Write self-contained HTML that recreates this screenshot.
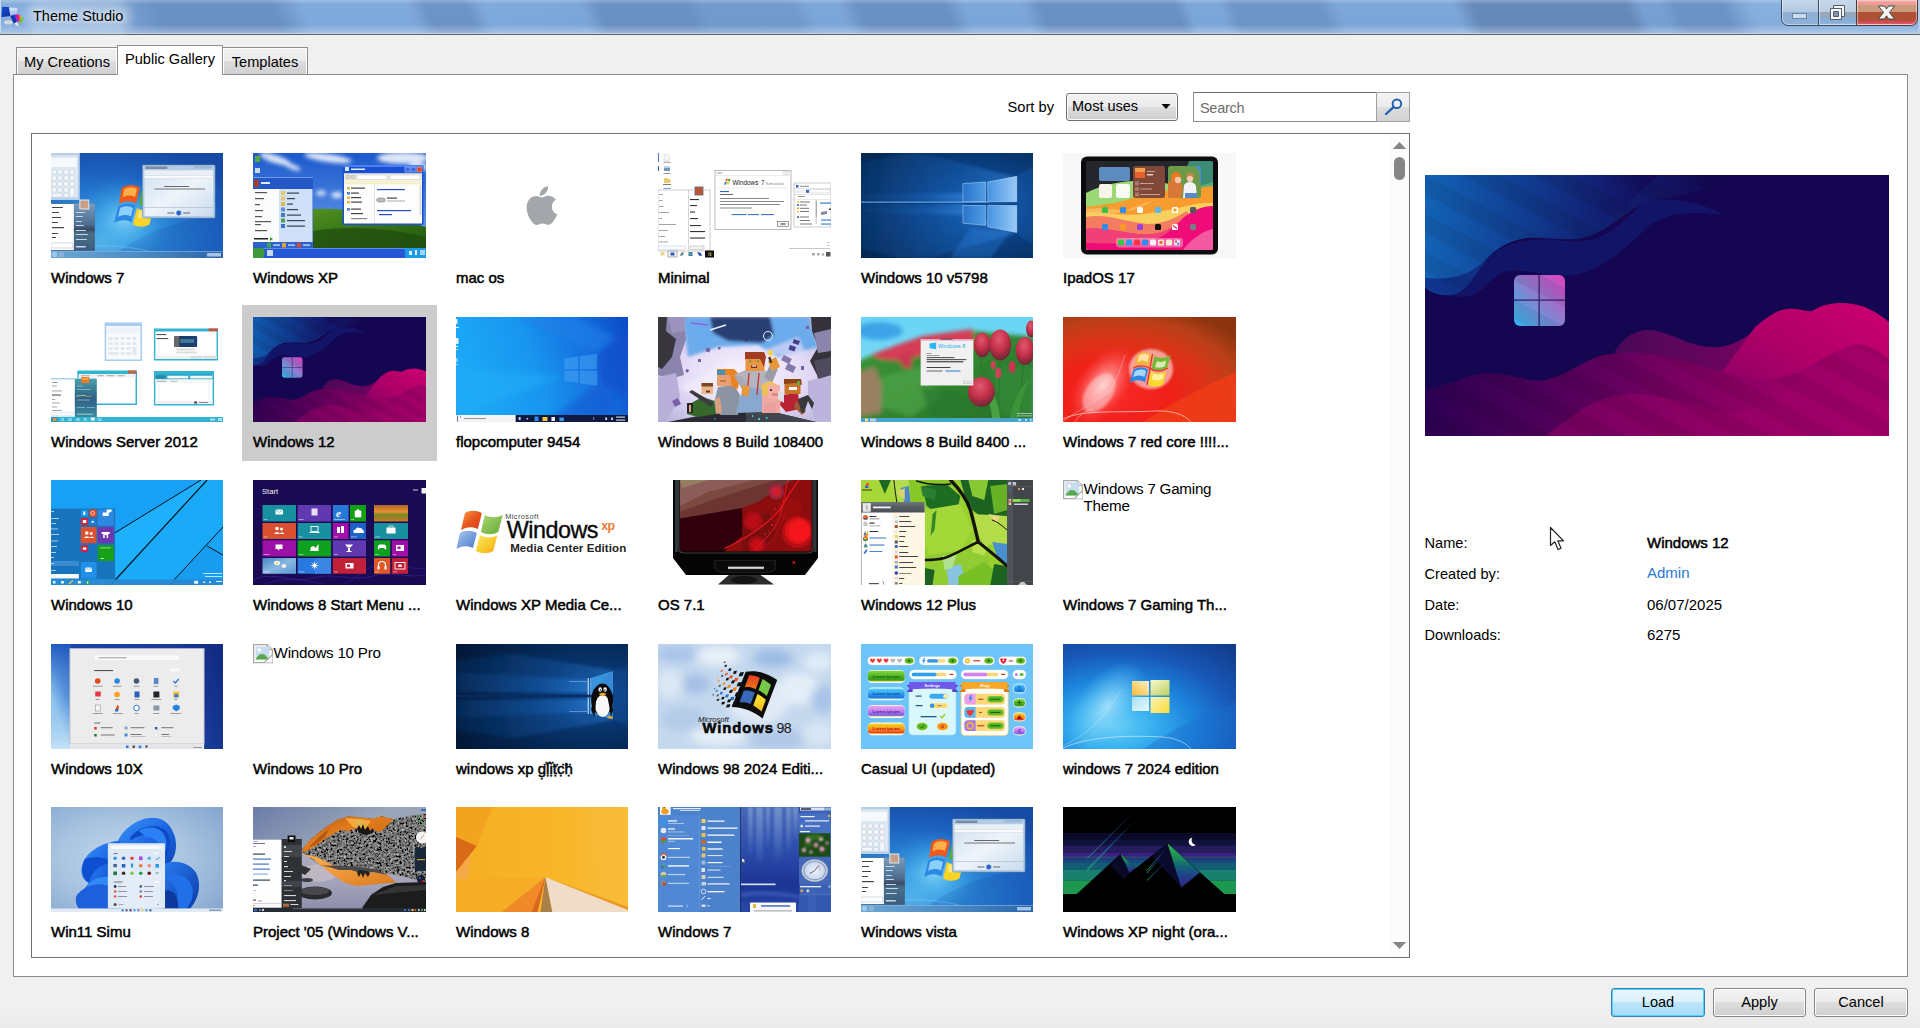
<!DOCTYPE html>
<html lang="en">
<head>
<meta charset="utf-8">
<title>Theme Studio</title>
<style>
*{box-sizing:border-box;margin:0;padding:0}
html,body{width:1920px;height:1028px;overflow:hidden;background:#f0f0f0 linear-gradient(#f0f0f0 0,#f0f0f0 1005px,#ebebeb 1028px) no-repeat;font-family:"Liberation Sans",sans-serif;color:#000}
body{position:relative}
.abs{position:absolute}
#titlebar{position:absolute;left:0;top:0;width:1920px;height:35px;overflow:hidden;
 background:#6f98c9}
#titlebar svg{position:absolute;left:0;top:0}
#title{position:absolute;left:33px;top:7px;font-size:14.5px;line-height:19px;color:#000;white-space:nowrap;
 text-shadow:0 0 5px rgba(255,255,255,0.9),0 0 9px rgba(255,255,255,0.8)}
.tab{position:absolute;font-size:14.6px;line-height:18px;white-space:nowrap;border:1px solid #8e8f8f;border-bottom:none;
 background:linear-gradient(#f2f2f2 0%,#ebebeb 49%,#dddddd 50%,#cfcfcf 100%);box-shadow:inset 1px 1px 0 #fcfcfc,inset -1px 0 0 #fcfcfc;text-align:center}
.tab.act{background:#fff;box-shadow:none;z-index:3}
#panel{position:absolute;left:13px;top:74px;width:1895px;height:903px;background:#fff;border:1px solid #8b8b8b}
#listbox{position:absolute;left:31px;top:133px;width:1379px;height:825px;background:#fff;border:1px solid #6f6f6f;overflow:hidden}
.item{position:absolute;width:195px;height:156px}
.item.sel{background:#cccccc}
.item svg,.item .ph{position:absolute;left:11px;top:12px;width:173px;height:105px;display:block}
.item .lbl{position:absolute;left:11px;top:127px;width:180px;font-size:15px;line-height:20px;font-weight:normal;-webkit-text-stroke:0.5px #000;white-space:nowrap;color:#000;letter-spacing:0}
.btn{position:absolute;height:29px;font-size:14.6px;line-height:27.5px;text-align:center;border:1px solid #858585;border-radius:3px;
 background:linear-gradient(#f2f2f2 0%,#ebebeb 49%,#dddddd 50%,#cfcfcf 100%);box-shadow:inset 0 0 0 1px #fcfcfc}
.row{position:absolute;font-size:15px;line-height:20px;white-space:nowrap}
</style>
</head>
<body>
<div id="titlebar">
<svg width="1920" height="35" viewBox="0 0 1920 35">
 <defs>
  <linearGradient id="tbg" x1="0" x2="1920" y1="0" y2="0" gradientUnits="userSpaceOnUse">
   <stop offset="0" stop-color="#86aedd"/>
   <stop offset="0.06" stop-color="#7ba3d5"/>
   <stop offset="0.085" stop-color="#6890c3"/>
   <stop offset="0.145" stop-color="#6890c3"/>
   <stop offset="0.16" stop-color="#7ea8dc"/>
   <stop offset="0.215" stop-color="#7ea8dc"/>
   <stop offset="0.225" stop-color="#6b93c6"/>
   <stop offset="0.245" stop-color="#6b93c6"/>
   <stop offset="0.255" stop-color="#7ea8dc"/>
   <stop offset="0.305" stop-color="#7ba5d9"/>
   <stop offset="0.315" stop-color="#6890c3"/>
   <stop offset="0.36" stop-color="#6890c3"/>
   <stop offset="0.37" stop-color="#7099cc"/>
   <stop offset="0.415" stop-color="#7099cc"/>
   <stop offset="0.425" stop-color="#7ba5d9"/>
   <stop offset="0.44" stop-color="#7ba5d9"/>
   <stop offset="0.45" stop-color="#6890c3"/>
   <stop offset="0.495" stop-color="#6890c3"/>
   <stop offset="0.505" stop-color="#7ba5d9"/>
   <stop offset="0.535" stop-color="#7ba5d9"/>
   <stop offset="0.545" stop-color="#6890c3"/>
   <stop offset="0.615" stop-color="#6890c3"/>
   <stop offset="0.622" stop-color="#7ba5d9"/>
   <stop offset="0.638" stop-color="#7ba5d9"/>
   <stop offset="0.645" stop-color="#6c94c7"/>
   <stop offset="0.69" stop-color="#6c94c7"/>
   <stop offset="0.70" stop-color="#7ba5d9"/>
   <stop offset="0.76" stop-color="#7ba5d9"/>
   <stop offset="0.77" stop-color="#6488b8"/>
   <stop offset="0.85" stop-color="#6488b8"/>
   <stop offset="0.858" stop-color="#769fd2"/>
   <stop offset="0.868" stop-color="#769fd2"/>
   <stop offset="0.875" stop-color="#6a92c5"/>
   <stop offset="0.9" stop-color="#6a92c5"/>
   <stop offset="0.915" stop-color="#86aedd"/>
   <stop offset="1" stop-color="#86aedd"/>
  </linearGradient>
  <linearGradient id="tsh" x1="0" x2="0" y1="0" y2="35" gradientUnits="userSpaceOnUse">
   <stop offset="0" stop-color="#fff" stop-opacity="0.25"/>
   <stop offset="0.12" stop-color="#fff" stop-opacity="0.02"/>
   <stop offset="0.7" stop-color="#fff" stop-opacity="0"/>
   <stop offset="0.93" stop-color="#fff" stop-opacity="0.3"/>
   <stop offset="1" stop-color="#fff" stop-opacity="0.3"/>
  </linearGradient>
  <linearGradient id="cb1" x1="0" x2="0" y1="0" y2="25" gradientUnits="userSpaceOnUse">
   <stop offset="0" stop-color="#c4d6ea"/><stop offset="0.46" stop-color="#b1c9e2"/><stop offset="0.47" stop-color="#8fb1d6"/><stop offset="1" stop-color="#8db0d8"/>
  </linearGradient>
  <linearGradient id="cb3" x1="0" x2="0" y1="0" y2="25" gradientUnits="userSpaceOnUse">
   <stop offset="0" stop-color="#c8d8ea"/><stop offset="0.46" stop-color="#bccee2"/><stop offset="0.47" stop-color="#98a8ba"/><stop offset="0.66" stop-color="#98a8ba"/><stop offset="0.67" stop-color="#88aad4"/><stop offset="0.92" stop-color="#8cb0d8"/><stop offset="1" stop-color="#a8c4e0"/>
  </linearGradient>
  <linearGradient id="cb2" x1="0" x2="0" y1="0" y2="25" gradientUnits="userSpaceOnUse">
   <stop offset="0" stop-color="#f4d0c8"/><stop offset="0.1" stop-color="#f09a9a"/><stop offset="0.2" stop-color="#f09a9a"/><stop offset="0.21" stop-color="#c99b7c"/><stop offset="0.47" stop-color="#c99b7c"/><stop offset="0.48" stop-color="#b05035"/><stop offset="0.83" stop-color="#b05035"/><stop offset="0.86" stop-color="#d04a5a"/><stop offset="0.93" stop-color="#d04a5a"/><stop offset="1" stop-color="#f0c8a8"/>
  </linearGradient>
 </defs>
 <g transform="skewX(22) translate(-8 0)"><rect x="-40" y="0" width="2000" height="35" fill="url(#tbg)"/></g>
 <rect x="0" y="0" width="1920" height="35" fill="url(#tsh)"/>
 <rect x="0" y="33" width="1920" height="1" fill="#c4d0dc"/>
 <rect x="0" y="34" width="1920" height="1" fill="#5c646c"/>
 <rect x="0" y="0" width="1" height="33" fill="#c4d8ee"/>
 <rect x="1918" y="0" width="2" height="33" fill="#b4cce8"/>
 <!-- caption buttons -->
 <path d="M1781.5 -1 V18 Q1781.5 25.5 1789 25.5 H1818.5 V-1 Z" fill="url(#cb1)" stroke="#3c4a60" stroke-width="1"/>
 <path d="M1818.5 -1 V25.5 H1856.5 V-1 Z" fill="url(#cb3)" stroke="#3c4a60" stroke-width="1"/>
 <path d="M1856.5 -1 V25.5 H1910 Q1917.5 25.5 1917.5 18 V-1 Z" fill="url(#cb2)" stroke="#4a3a3a" stroke-width="1"/>
 <path d="M1782.5 0 V18 Q1782.5 24.5 1789 24.5 H1817.5" fill="none" stroke="#fff" stroke-opacity="0.45"/>
 <path d="M1819.5 0 V24.5 H1855.5" fill="none" stroke="#fff" stroke-opacity="0.45"/>
 <path d="M1857.5 0 V24.5 H1910 Q1916.5 24.5 1916.5 18 V0" fill="none" stroke="#fff" stroke-opacity="0.45"/>
 <rect x="1792.5" y="13.5" width="14" height="5" fill="#c9dced" stroke="#6f86a4"/>
 <g fill="#f4f6f8" stroke="#555d68" stroke-width="1">
  <path d="M1833.5 5.500 h11 v11 h-11 z M1836.500 8.500 v5 h5 v-5 z" fill-rule="evenodd"/>
  <path d="M1830.500 8.500 h11 v11 h-11 z"/><path d="M1833.500 11.500 h5 v5 h-5 z" fill="#7c94b4"/>
 </g>
 <path d="M1878.300 6 h6 l2.200 3 l2.200 -3 h6 l-5.300 6.400 l5.300 6.600 h-6 l-2.200 -3.200 l-2.200 3.200 h-6 l5.300 -6.600 z" fill="#f4f4f4" stroke="#4a4848" stroke-width="1" stroke-linejoin="round"/>
 <!-- app icon -->
 <defs><linearGradient id="icb" x1="0" y1="0" x2="1" y2="1"><stop offset="0" stop-color="#1450d0"/><stop offset="1" stop-color="#0c30a0"/></linearGradient>
 <linearGradient id="icw" x1="0" y1="0" x2="0" y2="1"><stop offset="0" stop-color="#dce8f8"/><stop offset="1" stop-color="#98b8f0"/></linearGradient></defs>
 <g>
  <ellipse cx="8.400" cy="22.400" rx="4.400" ry="2.200" fill="#d4d8dc"/>
  <path d="M8.800 7.400 L17.300 7.900 L16.800 14.500 L10.200 15 Z" fill="url(#icw)" stroke="#b0b8c8" stroke-width="0.400"/>
  <path d="M2.100 6.700 L8.800 7 L10.200 16.100 L1.400 17.200 Z" fill="url(#icb)"/>
  <path d="M10.200 16.100 L14.700 14.700 L17 21.700 L13.700 23.500 Z" fill="#1038b0"/>
  <path d="M14.700 14.700 L17 14.300 L18.600 21.300 L17 21.700 Z" fill="#c010c0"/>
  <path d="M17 14.300 L18.800 15 L19.800 21.500 L18.600 21.300 Z" fill="#f01060"/>
  <path d="M18.800 15 L20.200 15.600 L20.600 22 L19.800 21.500 Z" fill="#f85010"/>
  <path d="M20.200 15.600 L21.400 16.400 L20.800 22.500 L20.600 22 Z" fill="#f8a818"/>
  <path d="M21.400 16.400 L24.200 18.600 L19.600 25.200 L20 21.700 Z" fill="#58c828"/>
  <path d="M14.400 23.800 L16.800 22 L19.300 26.600 L17 25.800 Z" fill="#f0f0f4" stroke="#a0a8b0" stroke-width="0.300"/>
 </g>
</svg>
<div class="abs" style="left:34px;top:11px;width:88px;height:12px;border-radius:8px;background:rgba(255,255,255,0.3);box-shadow:0 0 9px 10px rgba(255,255,255,0.3)"></div>
<div id="title">Theme Studio</div>
</div>

<div class="tab" style="left:16px;top:47px;width:102px;height:28px;padding-top:5px">My Creations</div>
<div class="tab" style="left:222px;top:47px;width:86px;height:28px;padding-top:5px">Templates</div>
<div id="panel"></div>
<div class="tab act" style="left:117px;top:45px;width:106px;height:30px;padding-top:4px">Public Gallery</div>

<div class="row" style="left:1007.5px;top:97px;font-size:14.7px">Sort by</div>
<div class="abs" style="left:1066px;top:93px;width:112px;height:28px;border:1px solid #707070;border-radius:3px;background:linear-gradient(#f2f2f2 0%,#ebebeb 49%,#dddddd 50%,#cfcfcf 100%);box-shadow:inset 0 0 0 1px #fcfcfc">
 <div class="row" style="left:5px;top:2px;font-size:14.5px">Most uses</div>
 <svg class="abs" style="left:93px;top:9px" width="12" height="7" viewBox="0 0 12 7"><path d="M1.500 1 H10.500 L6 6 Z" fill="#000"/></svg>
</div>
<div class="abs" style="left:1193px;top:92px;width:184px;height:30px;border:1px solid #8e8e8e;border-top-color:#6e6e6e;background:#fff">
 <div class="row" style="left:6px;top:4.5px;font-size:14.5px;letter-spacing:-0.3px;color:#6d6d6d">Search</div>
</div>
<div class="abs" style="left:1376px;top:92px;width:34px;height:30px;border:1px solid #a0a0a0;background:linear-gradient(#f4f4f4 0%,#ececec 49%,#dedede 50%,#d2d2d2 100%)">
 <svg class="abs" style="left:7px;top:4px" width="20" height="20" viewBox="0 0 20 20"><circle cx="12.900" cy="6.750" r="4.300" fill="none" stroke="#1e5fb4" stroke-width="1.900"/><path d="M9.600 10.200 L2 17" stroke="#1e5fb4" stroke-width="2.300" stroke-linecap="round"/></svg>
</div>

<div id="listbox">
 <!-- scrollbar -->
 <svg class="abs" style="left:1358px;top:0px" width="19" height="823" viewBox="0 0 19 823">
  <rect x="0" y="0" width="19" height="823" fill="#fcfcfc"/>
  <path d="M2.800 15 H16.200 L9.500 8 Z" fill="#868686"/>
  <rect x="4" y="23" width="11" height="23" rx="5.500" fill="#868686"/>
  <path d="M2.800 808 H16.200 L9.500 815 Z" fill="#868686"/>
 </svg>
<div class="item" style="left:8px;top:7px"><svg style="width:172px" preserveAspectRatio="none" viewBox="0 0 173 105">
<defs>
<radialGradient id="t01_bg" cx="0.3" cy="0.85" r="0.95"><stop offset="0" stop-color="#58b8ec"/><stop offset="0.35" stop-color="#2c8ad8"/><stop offset="0.7" stop-color="#1c62c0"/><stop offset="1" stop-color="#164aa4"/></radialGradient>
<linearGradient id="t01_win" x1="0" y1="0" x2="1" y2="1"><stop offset="0" stop-color="#cfe0f0"/><stop offset="0.5" stop-color="#eef4fa"/><stop offset="1" stop-color="#cadcee"/></linearGradient>
</defs>
<rect width="173" height="105" fill="url(#t01_bg)"/>
<radialGradient id="t01_gl" cx="0.5" cy="0.5" r="0.5"><stop offset="0" stop-color="#8cdcfc" stop-opacity="0.85"/><stop offset="0.5" stop-color="#48b0ec" stop-opacity="0.5"/><stop offset="1" stop-color="#2c8ad8" stop-opacity="0"/></radialGradient>
<path d="M60 105 C90 80 120 70 173 60 V105 Z" fill="#1a58b4" fill-opacity="0.35"/>
<ellipse cx="74" cy="66" rx="50" ry="42" fill="url(#t01_gl)"/>
<path d="M0 100 C40 88 90 92 120 105" stroke="#a8dcf8" stroke-width="0.500" fill="none" stroke-opacity="0.600"/>
<!-- logo -->
<g transform="translate(0 3)">
<path d="M71 32 C77 28 84 28 89.500 31.500 L85.500 47.500 C80 44.500 74.500 44.500 68.500 48 Z" fill="#f0581c"/>
<path d="M73.500 33.500 C78 30.500 83 30.500 86.500 33 L84.500 41 C80.500 39 76.500 39 72 41.500 Z" fill="#f8b048"/>
<path d="M67.500 50.500 C73.500 46.500 80 47 85 50 L81 66.500 C76 63.500 69.500 63.500 63.500 67 Z" fill="#2c88e4"/>
<path d="M69.500 52 C74 49.500 79 50 82.500 52 L80.500 60.500 C76.500 58.500 72 58.500 67.500 61 Z" fill="#8cd0fc"/>
<path d="M86.500 52 C91.500 55 97.500 55 103 52 L99 68.500 C93.500 71.500 88 71.500 82.500 68.500 Z" fill="#f8d428"/>
<path d="M88.500 54 C92 56 96 56 100 54.500 L98.500 61 C95 63 91 63 87.500 61.500 Z" fill="#fcf0a0" fill-opacity="0.700"/>
<path d="M91.500 34 C95.500 36.500 100 36.500 104.500 34 L101 48.500 C97 50.500 92.500 50.500 88.500 48.500 Z" fill="#58b030"/>
</g>
<!-- calculator -->
<rect x="0" y="0" width="29" height="47" fill="#b8d0e8"/>
<rect x="0" y="2.500" width="27" height="42" fill="#dfe9f3"/>
<rect x="0" y="5" width="26" height="9" fill="#f6f9fc"/>
<g fill="#f4f7fa" stroke="#a8b8c8" stroke-width="0.300"><rect x="1" y="17" width="4.500" height="4"/><rect x="7" y="17" width="4.500" height="4"/><rect x="13" y="17" width="4.500" height="4"/><rect x="19" y="17" width="4.500" height="4"/><rect x="1" y="23" width="4.500" height="4"/><rect x="7" y="23" width="4.500" height="4"/><rect x="13" y="23" width="4.500" height="4"/><rect x="19" y="23" width="4.500" height="4"/><rect x="1" y="29" width="4.500" height="4"/><rect x="7" y="29" width="4.500" height="4"/><rect x="13" y="29" width="4.500" height="4"/><rect x="19" y="29" width="4.500" height="4"/><rect x="1" y="35" width="4.500" height="4"/><rect x="7" y="35" width="4.500" height="4"/><rect x="13" y="35" width="4.500" height="4"/><rect x="19" y="35" width="4.500" height="9"/><rect x="1" y="40.500" width="10.500" height="3.500"/><rect x="13" y="40.500" width="4.500" height="3.500"/></g>
<!-- start menu -->
<rect x="0" y="50" width="44" height="48" rx="1" fill="#4a739e"/>
<linearGradient id="t01_smr" x1="0" y1="0" x2="0" y2="1"><stop offset="0" stop-color="#7c9cbc"/><stop offset="0.45" stop-color="#4c6c90"/><stop offset="0.55" stop-color="#3a4c64"/><stop offset="0.65" stop-color="#4a7088"/><stop offset="1" stop-color="#3c5c80"/></linearGradient><rect x="23" y="50.500" width="21" height="47" fill="url(#t01_smr)"/>
<rect x="0" y="51" width="23" height="46" fill="#fdfdfe"/>
<rect x="29" y="47" width="9" height="9" fill="#c8a088" stroke="#dfe8f0" stroke-width="1"/>
<g fill="#444"><rect x="1" y="54" width="11" height="1"/><rect x="1" y="59" width="7" height="1"/><rect x="1" y="64" width="9" height="1"/><rect x="1" y="69" width="6" height="1"/><rect x="1" y="74" width="12" height="1.200"/><rect x="1" y="80" width="6" height="1"/><rect x="1" y="84" width="4" height="1"/></g>
<g fill="#c8d8ea"><rect x="25" y="59" width="9" height="1"/><rect x="25" y="63" width="7" height="1"/><rect x="25" y="68" width="6" height="1"/><rect x="25" y="72" width="8" height="1"/><rect x="25" y="77" width="10" height="1"/><rect x="25" y="81" width="12" height="1"/><rect x="25" y="86" width="11" height="1"/><rect x="25" y="93" width="10" height="1.500"/></g>
<rect x="0" y="90" width="22" height="5" fill="#fff" stroke="#9ab" stroke-width="0.400"/>
<!-- dialog -->
<rect x="92" y="12" width="73" height="53" rx="1" fill="#b4cce6" stroke="#6d8cb0" stroke-width="0.600"/>
<rect x="94" y="17.500" width="69" height="45.500" fill="url(#t01_win)"/>
<rect x="94" y="17.500" width="69" height="4.500" fill="#e9eff6"/>
<rect x="94" y="22.500" width="69" height="3" fill="#f7f9fc" stroke="#b8c4d2" stroke-width="0.300"/>
<rect x="95" y="13.500" width="22" height="2.500" fill="#5c6f88" fill-opacity="0.7"/>
<rect x="144" y="12.500" width="18" height="3" fill="#9db8d8"/>
<rect x="114" y="33" width="25" height="1" fill="#666"/><rect x="104" y="35.500" width="51" height="1" fill="#777"/>
<rect x="94" y="54" width="69" height="0.600" fill="#a8b8cc"/>
<circle cx="128.500" cy="60" r="2.800" fill="#2864c8" stroke="#d8e8f8" stroke-width="0.600"/>
<rect x="117" y="59.500" width="7" height="1" fill="#667"/><rect x="133" y="59.500" width="7" height="1" fill="#667"/>
<!-- taskbar -->
<linearGradient id="t01_tb" x1="0" y1="0" x2="1" y2="0"><stop offset="0" stop-color="#6ca8d4"/><stop offset="0.5" stop-color="#4c8cc4"/><stop offset="1" stop-color="#2c64ac"/></linearGradient><rect x="0" y="98" width="173" height="7" fill="url(#t01_tb)"/>
<rect x="0" y="98" width="173" height="0.700" fill="#86b4e0"/>
<circle cx="3.500" cy="101.500" r="2.800" fill="#9cc8ec"/><rect x="8" y="99.500" width="5" height="4.500" fill="#8fb2d6"/>
<rect x="157" y="100" width="14" height="3.500" fill="#a8c4e4"/>
</svg>
<div class="lbl">Windows 7</div></div>
<div class="item" style="left:210px;top:7px"><svg preserveAspectRatio="none" viewBox="0 0 173 105">
<defs>
<linearGradient id="t02_sky" x1="0" y1="0" x2="0" y2="1"><stop offset="0" stop-color="#1c58cc"/><stop offset="0.6" stop-color="#5088e0"/><stop offset="1" stop-color="#8cb4ec"/></linearGradient>
<linearGradient id="t02_hill" x1="0" y1="0" x2="1" y2="1"><stop offset="0" stop-color="#5c9c24"/><stop offset="0.45" stop-color="#3c7a18"/><stop offset="1" stop-color="#1c4c0c"/></linearGradient>
<filter id="t02_bl"><feGaussianBlur stdDeviation="2"/></filter>
</defs>
<rect width="173" height="105" fill="url(#t02_sky)"/>
<g filter="url(#t02_bl)" fill="#fff" fill-opacity="0.85"><ellipse cx="22" cy="6" rx="16" ry="4" transform="rotate(18 22 6)"/><ellipse cx="75" cy="5" rx="24" ry="4" transform="rotate(8 75 5)"/><ellipse cx="150" cy="5" rx="26" ry="6"/><ellipse cx="165" cy="14" rx="10" ry="4"/><ellipse cx="68" cy="40" rx="5" ry="2.500"/><ellipse cx="84" cy="42" rx="6" ry="3"/><ellipse cx="40" cy="14" rx="8" ry="2.500" transform="rotate(20 40 14)"/></g>
<path d="M40 58 C60 55 85 55 100 58 C130 63 155 69 173 74 V105 H0 V60 Z" fill="url(#t02_hill)"/>
<path d="M60 78 C100 72 140 76 173 84 V105 H60 Z" fill="#204c10" fill-opacity="0.7"/>
<!-- desktop icons -->
<rect x="2" y="3" width="5" height="6" fill="#58a840"/><rect x="2" y="15" width="5" height="5" fill="#d0d8e8"/><rect x="2" y="25" width="5" height="6" fill="#a0a8b8"/>
<!-- start menu -->
<rect x="0" y="24" width="60" height="72" fill="#2c62cc"/>
<rect x="0" y="24" width="60" height="12" fill="#2458c4"/><rect x="0" y="24" width="60" height="1" fill="#6c9cec"/>
<rect x="1" y="27" width="5" height="7" fill="#a04030"/><rect x="8" y="29" width="9" height="2" fill="#dfe8f8"/>
<rect x="0" y="36" width="26" height="53" fill="#fcfcfc"/>
<rect x="26" y="36" width="33.500" height="53" fill="#d0e0f8"/>
<g fill="#555"><rect x="2" y="39" width="12" height="1.200"/><rect x="2" y="45" width="9" height="1.200"/><rect x="2" y="51" width="5" height="1.200"/><rect x="2" y="57" width="8" height="1.200"/><rect x="2" y="63" width="7" height="1.200"/><rect x="2" y="68" width="16" height="1.200"/><rect x="2" y="71" width="6" height="1.200"/><rect x="2" y="77" width="12" height="1.200"/><rect x="1" y="85" width="14" height="1.500" fill="#222"/></g>
<path d="M17 84 l3 2 l-3 2 z" fill="#30a030"/>
<g><rect x="28" y="38" width="4" height="4" fill="#e8c860"/><rect x="28" y="43.500" width="4" height="4" fill="#e8c860"/><rect x="28" y="49" width="4" height="4" fill="#e0b850"/><rect x="28" y="54.500" width="4" height="4" fill="#6090d0"/><rect x="28" y="60" width="4" height="4" fill="#4878c0"/><rect x="28" y="65.500" width="4" height="4" fill="#50a050"/><rect x="28" y="71" width="4" height="4" fill="#4070c0"/></g>
<g fill="#345"><rect x="34" y="39.500" width="12" height="1.200"/><rect x="34" y="45" width="8" height="1.200"/><rect x="34" y="50.500" width="6" height="1.200"/><rect x="34" y="56" width="11" height="1.200"/><rect x="34" y="61.500" width="14" height="1.200"/><rect x="34" y="67" width="18" height="1.200"/><rect x="34" y="72.500" width="18" height="1.200"/></g>
<rect x="0" y="89" width="60" height="7" fill="#2c62cc"/>
<rect x="14" y="90" width="4" height="4.500" fill="#40a840"/><rect x="29" y="90" width="4" height="4.500" fill="#e8a030"/><rect x="44" y="90" width="4" height="4.500" fill="#e04830"/>
<g fill="#dfe8f8"><rect x="20" y="91.500" width="7" height="1.200"/><rect x="35" y="91.500" width="7" height="1.200"/><rect x="50" y="91.500" width="7" height="1.200"/></g>
<!-- explorer -->
<rect x="89.500" y="12" width="81" height="60" rx="1.500" fill="#1c50d4"/>
<rect x="89.500" y="12" width="81" height="2" rx="1" fill="#4c80f0"/>
<rect x="92" y="14" width="4" height="4" fill="#d8e4f8"/><rect x="98" y="15.500" width="14" height="1.500" fill="#e8eefa"/>
<rect x="152" y="14" width="5" height="5" fill="#3c6ce4" stroke="#dfe8ff" stroke-width="0.400"/><rect x="158" y="14" width="5" height="5" fill="#3c6ce4" stroke="#dfe8ff" stroke-width="0.400"/><rect x="164" y="14" width="5" height="5" fill="#d84830" stroke="#ffe0d8" stroke-width="0.400"/>
<rect x="91" y="20.500" width="78" height="50" fill="#fefefe"/>
<rect x="91" y="20.500" width="78" height="7" fill="#ece9d8"/>
<circle cx="95" cy="24" r="2.200" fill="#d8d8d0" stroke="#999" stroke-width="0.300"/><circle cx="100" cy="24" r="2.200" fill="#d8d8d0" stroke="#999" stroke-width="0.300"/>
<rect x="104" y="22" width="30" height="4.500" fill="#fff" stroke="#99a8c0" stroke-width="0.300"/><rect x="137" y="22" width="30" height="4.500" fill="#fff" stroke="#99a8c0" stroke-width="0.300"/>
<rect x="91" y="27.500" width="78" height="4" fill="#f6f0d0"/>
<rect x="121" y="32" width="0.500" height="38" fill="#c8c8c8"/><rect x="166.500" y="32" width="2" height="30" fill="#d8dce8"/>
<g fill="#444"><rect x="98" y="34.500" width="14" height="1.200"/><rect x="98" y="39.500" width="8" height="1.200"/><rect x="98" y="44" width="10" height="1.200"/><rect x="98" y="48.500" width="11" height="1.200"/><rect x="98" y="55.500" width="10" height="1.200"/><rect x="98" y="60" width="12" height="1.200"/><rect x="98" y="65" width="16" height="1.200" fill="#888"/></g>
<g fill="#e8b840"><rect x="94" y="34" width="3" height="2.500"/><rect x="94" y="43.500" width="3" height="2.500"/><rect x="94" y="48" width="3" height="2.500"/></g>
<rect x="94" y="39" width="3" height="2.500" fill="#5080d0"/><rect x="94" y="55" width="3" height="2.500" fill="#5080d0"/>
<rect x="124" y="36" width="28" height="1.200" fill="#2850c0"/>
<ellipse cx="128" cy="47" rx="4.500" ry="2.200" fill="#b8b8b8" stroke="#666" stroke-width="0.400"/><rect x="134" y="44.500" width="10" height="1.200" fill="#444"/><rect x="134" y="47.500" width="18" height="1" fill="#aaa"/>
<rect x="124" y="57" width="34" height="1.200" fill="#2850c0"/><rect x="126" y="61" width="13" height="1.200" fill="#2850c0"/>
<!-- taskbar -->
<rect x="0" y="95" width="173" height="10" fill="#2458d4"/><rect x="0" y="95" width="173" height="1" fill="#5c8cf0"/>
<path d="M0 95 H10 Q13 100 10 105 H0 Z" fill="#3c9a3c"/>
<rect x="14" y="97" width="6" height="6" fill="#c8d8f0"/>
<rect x="152" y="95" width="21" height="10" fill="#1c9ce8"/><rect x="156" y="98" width="3" height="4" fill="#dfe8f8"/><rect x="162" y="97" width="2" height="5" fill="#dfe8f8"/><rect x="167" y="97" width="5" height="5" fill="#dfe8f8" fill-opacity="0.7"/>
</svg>
<div class="lbl">Windows XP</div></div>
<div class="item" style="left:413px;top:7px"><svg style="width:172px" preserveAspectRatio="none" viewBox="0 0 173 105">
<rect width="173" height="105" fill="#fff"/>
<g fill="#a3a7ab">
<path d="M92.500 33.200 C92.800 36.200 91.600 38.600 90 40.300 C88.400 42 86.300 43 84.300 42.800 C84 40 85.300 37.600 86.800 36 C88.400 34.300 90.800 33.300 92.500 33.200 Z"/>
<path d="M100.500 46.800 C97.800 48.400 96.300 50.900 96.400 53.900 C96.500 57.400 98.600 60 101.800 61.200 C101.100 63.300 100.200 65.200 98.900 67.100 C97.300 69.500 95.500 71.800 93 71.800 C90.600 71.900 89.800 70.400 87 70.400 C84.200 70.400 83.300 71.800 81 71.900 C78.600 72 76.700 69.400 75.100 67 C71.800 62.200 69.300 53.500 72.700 47.700 C74.300 44.800 77.300 43 80.500 42.900 C82.900 42.900 85.100 44.500 86.600 44.500 C88 44.500 90.800 42.600 93.700 42.900 C94.900 42.900 98.300 43.400 100.500 46.800 Z"/>
</g>
</svg>
<div class="lbl">mac os</div></div>
<div class="item" style="left:615px;top:7px"><svg preserveAspectRatio="none" viewBox="0 0 173 105">
<rect width="173" height="105" fill="#fff"/>
<!-- desktop icons -->
<rect x="0" y="0" width="0.800" height="9" fill="#2858c0"/>
<path d="M6 1 h4 l1.500 1.500 v5 h-5.500 z" fill="#f4f4f4" stroke="#bbb" stroke-width="0.300"/><rect x="5.500" y="8.800" width="7" height="0.800" fill="#777"/>
<rect x="6" y="13" width="6" height="5" fill="#7898b8"/><rect x="6" y="13" width="6" height="2" fill="#b8d0e8"/><rect x="5.500" y="20" width="7" height="0.800" fill="#777"/>
<rect x="0" y="13" width="1" height="5" fill="#2858c0"/>
<path d="M6 25 h3 l1 1 h2.500 v4 h-6.500 z" fill="#e8cc70"/><rect x="5" y="31" width="8" height="0.800" fill="#555"/>
<rect x="5.500" y="35" width="7" height="0.800" fill="#4888d8"/>
<!-- start menu -->
<rect x="0" y="37" width="52" height="61" fill="#fff" stroke="#9a9a9a" stroke-width="0.500"/>
<rect x="30.500" y="37" width="0.500" height="61" fill="#aaa"/>
<rect x="36.500" y="33.500" width="9" height="9" rx="1" fill="#b05838" stroke="#a8c0e0" stroke-width="1"/>
<g fill="#999"><rect x="1" y="41" width="4" height="0.900"/><rect x="1" y="47" width="3.500" height="0.900"/><rect x="1" y="53" width="4.500" height="0.900"/><rect x="1" y="59" width="10" height="0.900"/><rect x="1" y="65" width="3" height="0.900"/><rect x="1" y="71" width="17" height="0.900"/><rect x="1" y="77" width="9" height="0.900"/><rect x="1" y="83" width="6" height="0.900"/><rect x="1" y="88.500" width="9" height="0.900"/></g>
<g fill="#333"><rect x="32" y="46" width="9" height="1.100"/><rect x="32" y="52" width="7" height="1.100"/><rect x="32" y="58.500" width="5" height="1.100"/><rect x="32" y="65" width="8" height="1.100"/><rect x="32" y="72" width="11" height="1.100"/><rect x="32" y="78" width="15" height="1.100"/><rect x="32" y="84.500" width="15" height="1.100"/></g>
<rect x="0.500" y="93" width="27" height="3.500" fill="#fafcff" stroke="#a8c0e0" stroke-width="0.400"/><rect x="32" y="93" width="14" height="3.500" fill="#f4f4f4" stroke="#999" stroke-width="0.400"/>
<!-- about dialog -->
<rect x="57" y="17.500" width="76" height="59" fill="#fff" stroke="#a8a8a8" stroke-width="0.800"/>
<rect x="57.500" y="22.500" width="75" height="0.400" fill="#ccc"/>
<rect x="59" y="19.500" width="5" height="1" fill="#999"/><rect x="125" y="18.500" width="6" height="3" fill="#f0f0f0" stroke="#bbb" stroke-width="0.300"/>
<path d="M68 26 l2 -0.600 l-0.800 2.600 l-2 0.600z" fill="#e85020"/><path d="M70.600 25.400 l2 0.500 l-0.800 2.600 l-2 -0.500z" fill="#58a830"/><path d="M66.800 29.300 l2 -0.600 l-0.800 2.600 l-2 0.600z" fill="#2870d0"/><path d="M69.400 28.700 l2 0.500 l-0.800 2.600 l-2 -0.500z" fill="#f0c020"/>
<text x="74.500" y="31.800" font-family="Liberation Sans, sans-serif" font-size="6.400" fill="#222">Windows<tspan font-size="3" dy="-2">.</tspan><tspan dy="2" font-size="6.400"> 7</tspan><tspan font-size="4.400" fill="#888"> Simulator</tspan></text>
<rect x="60" y="34.800" width="70" height="0.400" fill="#ccc"/>
<rect x="62" y="38" width="9" height="1.100" fill="#2868c8"/><rect x="62" y="41" width="13" height="1" fill="#666"/>
<g fill="#888"><rect x="62" y="45" width="49" height="1"/><rect x="62" y="48" width="64" height="1"/><rect x="62" y="51" width="60" height="1"/><rect x="62" y="54.500" width="32" height="1"/></g>
<g fill="#3878d0"><rect x="73.500" y="61" width="15" height="1.100"/><rect x="90" y="61" width="11" height="1.100"/><rect x="103" y="61" width="13" height="1.100"/></g>
<rect x="119.500" y="68.500" width="11" height="5" fill="#f4f4f4" stroke="#444" stroke-width="0.500"/><rect x="122.500" y="70.500" width="5" height="1" fill="#333"/>
<!-- explorer right -->
<rect x="136" y="30" width="37" height="44" fill="#fff" stroke="#aaa" stroke-width="0.600"/>
<rect x="136" y="35" width="37" height="0.400" fill="#bbb"/><rect x="136" y="41" width="37" height="0.400" fill="#bbb"/><rect x="136" y="46.500" width="37" height="0.400" fill="#ccc"/>
<rect x="138" y="32" width="2.500" height="2.500" fill="#3060c0"/><rect x="142" y="32.800" width="9" height="1" fill="#888"/>
<rect x="137" y="37" width="10" height="3" fill="#f0f0f0"/><rect x="148" y="36.800" width="3" height="3" fill="#3060c0"/><rect x="152" y="36.500" width="20" height="3.500" fill="#fff" stroke="#999" stroke-width="0.300"/>
<rect x="140" y="43" width="7" height="1" fill="#999"/>
<rect x="157.500" y="47" width="1.500" height="24" fill="#d8d8d8"/><rect x="157.800" y="48" width="0.900" height="16" fill="#999"/>
<g fill="#777"><rect x="142" y="48.500" width="10" height="1"/><rect x="142" y="51.500" width="7" height="1"/><rect x="142" y="54.800" width="9" height="1"/><rect x="142" y="58" width="9" height="1"/><rect x="142" y="63.500" width="9" height="1"/><rect x="142" y="67" width="10" height="1"/><rect x="142" y="70.500" width="12" height="1"/></g>
<g><rect x="139" y="48.300" width="2" height="1.600" fill="#e8c040"/><rect x="139" y="51.300" width="2" height="1.600" fill="#3070d0"/><rect x="139" y="54.600" width="2" height="1.600" fill="#e8a030"/><rect x="139" y="57.800" width="2" height="1.600" fill="#e8c040"/><rect x="139" y="63.300" width="2" height="1.600" fill="#3060c0"/></g>
<rect x="162" y="49.500" width="11" height="1.200" fill="#3878d0"/><rect x="171" y="55.500" width="2" height="1.500" fill="#444"/>
<path d="M163 59 l6 -1 v3 l-6 1 z" fill="#889"/><rect x="163" y="66.500" width="10" height="1.100" fill="#3878d0"/><rect x="163" y="70.500" width="10" height="1.100" fill="#3878d0"/>
<!-- bottom -->
<g fill="#bbb"><rect x="169" y="89" width="3" height="0.800"/><rect x="169" y="92" width="3" height="0.800"/><rect x="131" y="95" width="41" height="0.800"/></g>
<rect x="2.500" y="99" width="4" height="3.500" fill="#f0d880"/>
<rect x="10" y="98" width="9" height="6" fill="#f8f8f8" stroke="#666" stroke-width="0.500"/><rect x="12.500" y="99.500" width="4" height="3" fill="#3058b8"/>
<path d="M22 103 l4 -4" stroke="#d0a040" stroke-width="1.200"/><circle cx="24" cy="101" r="1.500" fill="#5088d0"/>
<rect x="30.500" y="99" width="4" height="4" fill="#3878c0"/><rect x="31.500" y="100" width="2" height="2" fill="#60b050"/>
<path d="M39 99 l4 1 l1 3 l-3 -0.500 z" fill="#2848a8"/>
<rect x="47" y="97.500" width="9" height="7" fill="#111"/><rect x="50" y="99.500" width="1.500" height="1.500" fill="#e84020"/><rect x="51.800" y="99.500" width="1.500" height="1.500" fill="#60b030"/><rect x="50" y="101.300" width="1.500" height="1.500" fill="#2870d0"/><rect x="51.800" y="101.300" width="1.500" height="1.500" fill="#f0c020"/>
<g fill="#aaa"><rect x="154" y="100" width="3" height="2.500"/><rect x="159" y="100" width="2.500" height="2.500"/><circle cx="165" cy="101.500" r="1.300"/></g><rect x="168" y="99" width="4.500" height="4.500" fill="#555"/>
</svg>
<div class="lbl">Minimal</div></div>
<div class="item" style="left:818px;top:7px"><svg style="width:172px" preserveAspectRatio="none" viewBox="0 0 173 105">
<defs>
<radialGradient id="t05_bg" cx="0.68" cy="0.5" r="0.85"><stop offset="0" stop-color="#1058a8"/><stop offset="0.4" stop-color="#0a4084"/><stop offset="0.75" stop-color="#073062"/><stop offset="1" stop-color="#052650"/></radialGradient>
<linearGradient id="t05_beam" x1="1" y1="0" x2="0" y2="0"><stop offset="0" stop-color="#4ca8ff" stop-opacity="0.9"/><stop offset="0.35" stop-color="#2880e0" stop-opacity="0.6"/><stop offset="1" stop-color="#1a64c0" stop-opacity="0.3"/></linearGradient>
<linearGradient id="t05_paneL" x1="0" y1="0" x2="1" y2="0"><stop offset="0" stop-color="#2c78d0"/><stop offset="1" stop-color="#5ca8f0"/></linearGradient>
<linearGradient id="t05_paneR" x1="0" y1="0" x2="1" y2="0"><stop offset="0" stop-color="#4c98e8"/><stop offset="1" stop-color="#a4d4ff"/></linearGradient>
<filter id="t05_bl"><feGaussianBlur stdDeviation="1.800"/></filter>
<filter id="t05_b2"><feGaussianBlur stdDeviation="0.700"/></filter>
</defs>
<rect width="173" height="105" fill="url(#t05_bg)"/>
<g filter="url(#t05_bl)">
<path d="M156 24 L60 0 L20 0 L0 8 L0 46 L104 46 Z" fill="url(#t05_beam)" fill-opacity="0.4"/>
<path d="M156 80 L70 105 L30 105 L0 98 L0 56 L104 56 Z" fill="url(#t05_beam)" fill-opacity="0.42"/>
<path d="M104 40 L0 42 V58 L104 62 Z" fill="url(#t05_beam)" fill-opacity="0.4"/>
<path d="M157 22 L173 14 V92 L157 81 Z" fill="#2a78d8" fill-opacity="0.22"/>
<path d="M110 75 L90 105 H130 L150 80 Z" fill="#2c80e0" fill-opacity="0.35"/>
<path d="M0 0 H45 L0 10 Z" fill="#062650" fill-opacity="0.7"/>
<path d="M0 105 H40 L0 96 Z" fill="#062650" fill-opacity="0.7"/>
</g>
<g filter="url(#t05_b2)">
<rect x="0" y="49.300" width="128" height="2.200" fill="#0a3a78" fill-opacity="0.5"/>
<rect x="0" y="48.600" width="128" height="1" fill="#8cc4ff" fill-opacity="0.85"/>
<path d="M102.500 30.600 L125.400 29 V48.700 H102.500 Z" fill="url(#t05_paneL)" fill-opacity="0.85"/>
<path d="M127.500 29 L156.700 23.300 V48.700 H127.500 Z" fill="url(#t05_paneR)" fill-opacity="0.92"/>
<path d="M102.500 52.500 H125.400 V72.300 L102.500 70.200 Z" fill="url(#t05_paneL)" fill-opacity="0.85"/>
<path d="M127.500 52.500 H156.700 V79.600 L127.500 73.700 Z" fill="url(#t05_paneR)" fill-opacity="0.92"/>
</g>
<path d="M102.500 30.600 L125.400 29 V48.700 H102.500 Z M127.500 29 L156.700 23.300 V48.700 H127.500 Z M102.500 52.500 H125.400 V72.300 L102.500 70.200 Z M127.500 52.500 H156.700 V79.600 L127.500 73.700 Z" fill="none" stroke="#d0e8ff" stroke-width="0.600" stroke-opacity="0.75"/>
</svg>
<div class="lbl">Windows 10 v5798</div></div>
<div class="item" style="left:1020px;top:7px"><svg preserveAspectRatio="none" viewBox="0 0 173 105">
<defs><clipPath id="t06_scr"><rect x="23" y="8" width="127" height="89" rx="2"/></clipPath></defs>
<rect width="173" height="105" fill="#f8f8f8"/>
<rect x="18" y="3.500" width="137" height="98" rx="6" fill="#0c0c0e"/>
<g clip-path="url(#t06_scr)">
<rect x="23" y="8" width="127" height="89" fill="#25262c"/>
<path d="M126 8 H150 V30 C146 31 140 33 132 33 C124 28 122 18 126 8 Z" fill="#3c8c74"/>
<path d="M23 40 C35 34 50 29 70 28 C95 27 110 33 130 33 C140 33 146 31 150 29 V97 H23 Z" fill="#9cd874"/>
<path d="M132 33 C140 33 146 31 150 29 V40 H128 Z" fill="#58b070"/>
<path d="M23 54 C40 52 55 50 70 45 C90 39 108 36 128 35 C140 34 146 34 150 33 V97 H23 Z" fill="#f89c30"/>
<path d="M23 56 C40 54 52 56 62 58 C72 54 80 50 90 48 C75 56 60 62 23 62 Z" fill="#f8b860"/>
<path d="M23 60 C40 58 58 64 80 61 C100 58 112 56 128 52 C138 50 146 50 150 50 V97 H23 Z" fill="#f8d060"/>
<path d="M23 64 C45 60 65 70 85 71 C100 71 110 66 124 58 L130 70 L100 86 L23 86 Z" fill="#f47c60"/>
<path d="M150 53 C140 53 130 57 120 65 C108 78 95 83 75 81 C55 79 40 74 23 76 V97 H150 Z" fill="#f00c78"/>
<path d="M23 76 C40 74 55 79 75 81 C90 82 100 80 110 74 C100 88 80 92 23 90 Z" fill="#f04078"/>
<path d="M120 97 C128 86 140 78 150 76 V97 Z" fill="#f458a0"/>
<!-- widgets -->
<rect x="36" y="14" width="31" height="14" rx="2" fill="#4878b0"/><rect x="36" y="14" width="31" height="14" rx="2" fill="#88b0d8" fill-opacity="0.35"/>
<rect x="36" y="31" width="13" height="14" rx="2" fill="#f8f4ec"/><rect x="53" y="31" width="14" height="14" rx="2" fill="#fafaf4"/>
<rect x="70" y="13" width="32" height="32" rx="2.500" fill="#804838"/>
<rect x="72" y="15" width="10" height="10" fill="#e86030"/><rect x="72" y="15" width="10" height="4" fill="#f0a048"/>
<g fill="#c8a090"><rect x="84" y="18" width="8" height="1"/><rect x="84" y="21" width="6" height="1.500" fill="#e8d0c0"/><rect x="77" y="30" width="14" height="1"/><rect x="77" y="35.500" width="12" height="1"/><rect x="77" y="41" width="20" height="1"/></g>
<g fill="#a87868"><rect x="72" y="28.500" width="4" height="4"/><rect x="72" y="34" width="4" height="4"/><rect x="72" y="39.500" width="4" height="4"/></g>
<rect x="105" y="13" width="33" height="32" rx="2.500" fill="#6c9a48"/>
<path d="M105 30 C110 24 118 26 120 35 L118 45 H107.500 Q105 45 105 42.500 Z" fill="#d87838"/><circle cx="113" cy="24" r="5" fill="#f07828"/><circle cx="115" cy="27" r="3.200" fill="#f4c8a8"/>
<circle cx="127" cy="24" r="4" fill="#c88850"/><circle cx="127" cy="26" r="3" fill="#f4d0b8"/><path d="M121 32 C124 28 131 28 133 33 L134 45 H120 Z" fill="#f4f4f8"/><path d="M122 40 h12 v5 h-12 z" fill="#5888c8"/>
<path d="M132 14 C137 16 138 24 136 30 L138 30 V15.500 Q138 13 135.500 13 Z" fill="#4890d8"/>
<!-- icons -->
<g>
<rect x="39" y="54" width="6" height="6" rx="1.500" fill="#38c048"/><rect x="57" y="54" width="6" height="6" rx="1.500" fill="#2c8cf0"/><rect x="74" y="54" width="6" height="6" rx="1.500" fill="#f8f8f8"/><rect x="92" y="54" width="6" height="6" rx="1.500" fill="#58b8e8"/><rect x="109" y="54" width="6" height="6" rx="1.500" fill="#fff"/><rect x="127" y="54" width="6" height="6" rx="1.500" fill="#555a60"/>
<rect x="39" y="71" width="6" height="6" rx="1.500" fill="#2c8cf0"/><rect x="57" y="71" width="6" height="6" rx="1.500" fill="#f89828"/><rect x="74" y="71" width="6" height="6" rx="1.500" fill="#9840d8"/><rect x="92" y="71" width="6" height="6" rx="1.500" fill="#111"/><rect x="109" y="71" width="6" height="6" rx="1.500" fill="#fff"/><rect x="127" y="71" width="6" height="6" rx="1.500" fill="#7a7e84"/>
<circle cx="112" cy="57" r="1.800" fill="#f8a020"/><path d="M110 72.500 l4 3" stroke="#e82040" stroke-width="1.200"/>
</g>
<!-- dock -->
<rect x="53" y="85" width="67" height="9.500" rx="3" fill="#fff" fill-opacity="0.35"/>
<g><rect x="55" y="86.500" width="6" height="6" rx="1.500" fill="#38c848"/><rect x="63" y="86.500" width="6" height="6" rx="1.500" fill="#2c9cf0"/><rect x="71" y="86.500" width="6" height="6" rx="1.500" fill="#f03848"/><rect x="79" y="86.500" width="6" height="6" rx="1.500" fill="#2c8cf0"/><rect x="87" y="86.500" width="6" height="6" rx="1.500" fill="#f4f4f4"/><rect x="95" y="86.500" width="6" height="6" rx="1.500" fill="#f8f0e0"/><rect x="103" y="86.500" width="6" height="6" rx="1.500" fill="#f8f4d0"/><rect x="111" y="86.500" width="6" height="6" rx="1.500" fill="#e8e0f0"/>
<circle cx="98" cy="89.500" r="1.800" fill="#f06838"/><rect x="112" y="87.500" width="2" height="2" fill="#f04848"/><rect x="114.200" y="89.700" width="2" height="2" fill="#3c8cf0"/></g>
</g>
</svg>
<div class="lbl">IpadOS 17</div></div>
<div class="item" style="left:8px;top:171px"><svg style="width:172px" preserveAspectRatio="none" viewBox="0 0 173 105">
<defs><linearGradient id="t07_sm" x1="0" y1="0" x2="0" y2="1"><stop offset="0" stop-color="#4aa0a8"/><stop offset="0.5" stop-color="#2f5f86"/><stop offset="1" stop-color="#3a8a9c"/></linearGradient></defs>
<rect width="173" height="105" fill="#fff"/>
<!-- calc -->
<rect x="54" y="5.500" width="37.500" height="38.500" fill="#a4cdf0"/>
<rect x="55.500" y="9" width="34.500" height="33.500" fill="#f8fbfe"/>
<rect x="56.500" y="10" width="32.500" height="7" fill="#eef4fa"/>
<g fill="#e4e8ee"><rect x="58" y="20" width="4" height="3"/><rect x="64" y="20" width="4" height="3"/><rect x="70" y="20" width="4" height="3"/><rect x="76" y="20" width="4" height="3"/><rect x="82" y="20" width="4" height="3"/><rect x="58" y="25" width="4" height="3"/><rect x="64" y="25" width="4" height="3"/><rect x="70" y="25" width="4" height="3"/><rect x="76" y="25" width="4" height="3"/><rect x="82" y="25" width="4" height="3"/><rect x="58" y="30" width="4" height="3"/><rect x="64" y="30" width="4" height="3"/><rect x="70" y="30" width="4" height="3"/><rect x="76" y="30" width="4" height="3"/><rect x="82" y="30" width="4" height="8"/><rect x="58" y="35" width="10" height="3"/><rect x="70" y="35" width="4" height="3"/><rect x="76" y="35" width="4" height="3"/></g>
<!-- dialog -->
<rect x="103.500" y="11.500" width="64.500" height="32" fill="#34b2d2"/>
<rect x="158.500" y="11.500" width="9" height="2.800" fill="#d84830"/>
<rect x="105" y="14.500" width="61.500" height="27.500" fill="#fff"/>
<rect x="105" y="38.500" width="61.500" height="3.500" fill="#f0f0f0"/><rect x="141" y="39.200" width="11" height="2.200" fill="#e4e4e4" stroke="#a8c8e8" stroke-width="0.300"/><rect x="154" y="39.200" width="11" height="2.200" fill="#e4e4e4" stroke="#bbb" stroke-width="0.300"/>
<rect x="106" y="17" width="10" height="1.100" fill="#555"/><rect x="106" y="21" width="12" height="1.100" fill="#555"/>
<rect x="124" y="19" width="23" height="11" rx="1" fill="#1c3c70"/><rect x="130" y="22" width="14" height="4" fill="#4888a0" fill-opacity="0.8"/><rect x="124" y="19" width="5" height="11" fill="#686868"/>
<rect x="126" y="31.500" width="19" height="2" fill="#ddd"/><rect x="126" y="34.500" width="21" height="2" fill="#ddd"/>
<!-- window 3 -->
<rect x="26.500" y="53.500" width="60" height="34.500" fill="#34b2d2"/>
<rect x="77.500" y="53.500" width="8.500" height="2.800" fill="#d85838"/>
<rect x="28" y="57" width="57" height="29.500" fill="#fff"/>
<rect x="28" y="57" width="57" height="3.500" fill="#eef2f6"/>
<g fill="#aaa"><rect x="30" y="58.200" width="9" height="1"/><rect x="47" y="58.200" width="6" height="1"/><rect x="56" y="58.200" width="8" height="1"/><rect x="67" y="58.200" width="7" height="1"/></g>
<!-- window 4 -->
<rect x="103.500" y="54" width="60.500" height="34.500" fill="#34b2d2"/>
<rect x="105" y="57" width="57.500" height="30" fill="#fff"/>
<rect x="105" y="57" width="57.500" height="5.500" fill="#2fa8c8"/><rect x="105" y="58.500" width="10" height="3" fill="#2888a8"/><rect x="117" y="58.800" width="21" height="2.600" fill="#f4f8fa"/><rect x="140" y="58.800" width="22" height="2.600" fill="#f4f8fa"/>
<rect x="105" y="62.500" width="57.500" height="3.500" fill="#f4f6f8"/><rect x="106" y="63.800" width="10" height="1" fill="#aaa"/><rect x="120" y="63.800" width="7" height="1" fill="#bbb"/>
<rect x="105" y="84" width="57.500" height="3" fill="#f0f0f0"/><rect x="144" y="84.500" width="3" height="2" fill="#446"/><rect x="149" y="85" width="9" height="1" fill="#888"/>
<!-- start menu -->
<rect x="0" y="61" width="46" height="39" fill="#a8d4ee"/>
<rect x="0" y="62.500" width="24" height="37" fill="#fff"/>
<rect x="24" y="62" width="22" height="38" fill="url(#t07_sm)"/>
<rect x="30.500" y="60" width="8" height="6" fill="#f07828"/><rect x="31.500" y="61" width="6" height="2" fill="#f8a040"/>
<g fill="#999"><rect x="1" y="65" width="6" height="0.900"/><rect x="1" y="68.500" width="5" height="0.900"/><rect x="1" y="73.500" width="10" height="0.900"/><rect x="1" y="77.500" width="9" height="1.100" fill="#555"/><rect x="1" y="82" width="3" height="0.900"/><rect x="1" y="85.500" width="8" height="0.900"/><rect x="1" y="89.500" width="5" height="0.900"/><rect x="1" y="93" width="10" height="0.900"/></g>
<rect x="0.500" y="95.500" width="22" height="3" fill="#f8fafc" stroke="#b8c8d8" stroke-width="0.300"/>
<g fill="#9cc8d4" fill-opacity="0.7"><rect x="26" y="68.500" width="6" height="1"/><rect x="26" y="72" width="14" height="1"/><rect x="26" y="78" width="9" height="1"/><rect x="26" y="82.500" width="13" height="1"/><rect x="26" y="90" width="8" height="1"/><rect x="36" y="90" width="8" height="1"/><rect x="26" y="96.500" width="16" height="1.500"/></g>
<path d="M25 80 l8 -2 l2 1.500 l6 -0.500" stroke="#e8c040" stroke-width="0.500" fill="none"/>
<!-- taskbar -->
<rect x="0" y="100" width="173" height="5" fill="#34b2d2"/>
<rect x="0" y="100" width="7" height="5" fill="#2898b8"/><rect x="2" y="101" width="3.500" height="3" fill="#f08838"/>
<g fill="#7cd0e8"><rect x="10" y="101" width="3" height="3"/><rect x="17" y="101" width="4" height="3"/><rect x="25" y="101" width="4" height="3"/><rect x="33" y="101" width="3" height="3"/><rect x="47" y="101" width="4" height="3"/></g><rect x="40" y="100.500" width="4" height="3" fill="#e8f4fa"/>
<rect x="160" y="101.500" width="5" height="2" fill="#a8e0f0"/><rect x="168" y="101" width="4" height="3" fill="#a8e0f0"/>
</svg>
<div class="lbl">Windows Server 2012</div></div>
<div class="item sel" style="left:210px;top:171px"><svg viewBox="16.900 0 430.200 261" preserveAspectRatio="none"><defs>
 <linearGradient id="t08_pvb1" x1="0" y1="0" x2="1" y2="0"><stop offset="0" stop-color="#1263b6"/><stop offset="0.45" stop-color="#103a8e"/><stop offset="1" stop-color="#14085a"/></linearGradient>
 <linearGradient id="t08_pvb2" x1="0" y1="0" x2="1" y2="0"><stop offset="0" stop-color="#1050a4"/><stop offset="0.5" stop-color="#10287a"/><stop offset="1" stop-color="#140650"/></linearGradient>
 <linearGradient id="t08_pvp1" x1="0" y1="0" x2="1" y2="0"><stop offset="0" stop-color="#2c0052"/><stop offset="0.35" stop-color="#5a005c"/><stop offset="0.7" stop-color="#900064"/><stop offset="1" stop-color="#a80068"/></linearGradient>
 <linearGradient id="t08_pvp2" x1="0" y1="1" x2="1" y2="0"><stop offset="0" stop-color="#6a0060"/><stop offset="0.6" stop-color="#b00068"/><stop offset="1" stop-color="#cc0070"/></linearGradient>
 <linearGradient id="t08_pvp0" x1="0" y1="0" x2="1" y2="0"><stop offset="0" stop-color="#4a0858"/><stop offset="1" stop-color="#8a0064"/></linearGradient>
 <linearGradient id="t08_pvlg" x1="0" y1="1" x2="1" y2="0"><stop offset="0" stop-color="#30b8f0"/><stop offset="0.5" stop-color="#8a80d0"/><stop offset="1" stop-color="#e040c0"/></linearGradient>
 <pattern id="t08_pvst" width="34" height="34" patternUnits="userSpaceOnUse" patternTransform="rotate(28)"><rect width="34" height="17" fill="#000" fill-opacity="0.07"/></pattern>
</defs>
<rect width="464" height="261" fill="#140650"/>
<!-- blue waves -->
<path d="M0 0 H300 C270 25 240 20 215 30 C190 45 175 62 150 64 C120 66 95 55 70 75 C50 95 45 118 25 120 C15 121 5 117 0 112 Z" fill="url(#t08_pvb2)"/>
<path d="M0 0 H235 C215 15 205 30 185 42 C160 58 140 62 115 62 C90 62 75 70 60 85 C45 100 30 105 0 103 Z" fill="url(#t08_pvb1)"/>
<path d="M60 85 C80 65 110 62 140 66 C170 68 185 62 215 30 C240 20 270 25 300 40 C260 35 240 40 225 50 C200 75 175 95 150 100 C120 103 100 92 80 97 C65 102 58 118 45 121 C35 123 15 121 0 112 V103 C30 105 45 100 60 85 Z" fill="#10207a" fill-opacity="0.55"/>
<path d="M0 0 H300 C270 25 240 20 215 30 C190 45 175 62 150 64 C120 66 95 55 70 75 C50 95 45 118 25 120 C15 121 5 117 0 112 Z" fill="url(#t08_pvst)"/>
<!-- pink waves -->
<path d="M190 176 C200 160 215 152 232 156 C255 162 270 174 295 172 C320 168 335 150 350 140 C360 134 375 133 385 137 L400 200 L200 200 Z" fill="url(#t08_pvp0)"/>
<path d="M330 152 C345 140 355 132 370 134 C378 135 382 137 387 136 C400 128 415 127 428 129 C445 132 455 140 464 147 V261 H250 Z" fill="url(#t08_pvp2)"/>
<path d="M0 215 C20 212 40 200 60 198 C85 197 100 208 120 205 C145 200 160 182 185 179 C210 176 235 178 260 186 C285 194 310 202 340 204 C375 205 395 180 427 170 C440 167 452 175 464 184 V261 H0 Z" fill="url(#t08_pvp1)"/>
<path d="M160 232 C180 222 200 216 225 220 C260 226 290 240 320 236 C350 230 370 205 400 190 C425 178 445 172 464 185 V261 H120 Z" fill="#a00068" fill-opacity="0.45"/>
<path d="M0 215 C20 212 40 200 60 198 C85 197 100 208 120 205 C145 200 160 182 185 179 C210 176 235 178 260 186 C285 194 310 202 340 204 C375 205 395 180 427 170 C440 167 452 175 464 184 V261 H0 Z" fill="url(#t08_pvst)"/>
<!-- logo -->
<rect x="89" y="100" width="51" height="51" rx="6" fill="url(#t08_pvlg)"/>
<rect x="89" y="100" width="51" height="51" rx="6" fill="url(#t08_pvst)"/>
<rect x="113.500" y="100" width="1.200" height="51" fill="#2a1a60"/>
<rect x="89" y="124.500" width="51" height="1.200" fill="#2a1a60"/>
</svg><div class="lbl">Windows 12</div></div>
<div class="item" style="left:413px;top:171px"><svg style="width:172px" preserveAspectRatio="none" viewBox="0 0 173 105">
<defs>
<linearGradient id="t09_bg" x1="0" y1="0.300" x2="1" y2="0.100"><stop offset="0" stop-color="#1ca8f6"/><stop offset="0.4" stop-color="#1896f0"/><stop offset="0.7" stop-color="#1672e0"/><stop offset="1" stop-color="#0c4cc8"/></linearGradient>
<filter id="t09_bl"><feGaussianBlur stdDeviation="3"/></filter>
</defs>
<rect width="173" height="105" fill="url(#t09_bg)"/>
<g filter="url(#t09_bl)"><path d="M142 36 L60 0 H120 L160 20 Z" fill="#1c80e8" fill-opacity="0.6"/><path d="M142 36 L173 10 V80 L145 68 Z" fill="#0c50cc" fill-opacity="0.7"/><path d="M142 68 L90 105 H150 L160 80 Z" fill="#1058d0" fill-opacity="0.6"/><path d="M109 60 L0 98 V50 Z" fill="#20b0f8" fill-opacity="0.5"/></g>
<g fill="#4ca8f8" fill-opacity="0.5"><path d="M109 41.500 L123 39.500 V52 H109 Z"/><path d="M124.500 39.200 L142 36.500 V52 H124.500 Z"/><path d="M109 53.500 H123 V66 L109 64 Z"/><path d="M124.500 53.500 H142 V69 L124.500 66.300 Z"/></g>
<g fill="#e8f0f8"><rect x="0" y="2" width="1.500" height="5"/><rect x="0" y="10" width="3" height="1"/><rect x="0" y="21" width="2.500" height="6"/><rect x="0" y="29" width="2" height="1"/><rect x="0.500" y="32" width="1.500" height="1"/><rect x="0" y="41" width="1.500" height="4" fill-opacity="0.6"/><rect x="0.500" y="47" width="1.500" height="1"/></g>
<rect x="0" y="98" width="173" height="7" fill="#0e1a40"/>
<rect x="0" y="98" width="60" height="7" fill="#f2f4f6"/>
<rect x="1" y="98.500" width="0.600" height="6" fill="#223"/><rect x="4" y="99.500" width="1" height="1" fill="#556"/><rect x="8" y="101" width="22" height="1.100" fill="#999"/>
<g fill="#c8d0e0"><rect x="63" y="100" width="2" height="3"/><rect x="71" y="101" width="1.500" height="1.500"/><rect x="138" y="100" width="1" height="3" fill-opacity="0.6"/><rect x="150" y="100.500" width="2" height="2.500"/><rect x="156" y="100.500" width="2" height="2.500"/><rect x="161" y="99.500" width="9" height="1.200"/><rect x="161" y="102.500" width="9" height="1.200"/></g>
<rect x="79" y="99.500" width="4" height="4.500" fill="#2c8ce8"/><rect x="87" y="100" width="5" height="4" fill="#f8c838"/><rect x="96" y="100" width="3.500" height="4" fill="#f4f4f8"/><rect x="104" y="100.500" width="4.500" height="3.500" fill="#3c98e8"/>
</svg>
<div class="lbl">flopcomputer 9454</div></div>
<div class="item" style="left:615px;top:171px"><svg preserveAspectRatio="none" viewBox="0 0 173 105">
<defs>
<radialGradient id="t10_bg" cx="0.5" cy="0.55" r="0.7"><stop offset="0" stop-color="#f8f4fe"/><stop offset="0.5" stop-color="#e4dcf6"/><stop offset="0.85" stop-color="#c0b8e0"/><stop offset="1" stop-color="#a8a0d0"/></radialGradient>
<filter id="t10_bl"><feGaussianBlur stdDeviation="1.600"/></filter>
<filter id="t10_b2"><feGaussianBlur stdDeviation="0.500"/></filter>
</defs>
<rect width="173" height="105" fill="url(#t10_bg)"/>
<g filter="url(#t10_bl)">
<path d="M25 0 H150 L160 30 L120 40 L100 28 L60 30 L30 40 Z" fill="#6cacec"/>
<path d="M52 0 H112 L116 18 L104 26 L70 24 L55 16 Z" fill="#2a4074"/>
<path d="M86 40 L40 80 L20 70 Z" fill="#f4f0fc" fill-opacity="0.6"/>
<path d="M100 36 L140 20 L150 40 Z" fill="#d8d8f8" fill-opacity="0.7"/>
</g>
<g filter="url(#t10_b2)">
<!-- side rocks -->
<path d="M0 0 H26 L28 22 L22 40 L26 58 L12 62 L0 58 Z" fill="#8c84ac"/>
<path d="M0 0 H9 L8 14 L18 22 L14 40 L4 52 L0 50 Z" fill="#38363e"/>
<path d="M10 0 H27 L27 14 L14 16 Z" fill="#9c94bc"/>
<path d="M0 60 L18 56 L22 80 L12 98 L0 105 Z" fill="#b8b0d8"/><path d="M14 84 l6 -3 l3 6 l-6 3 z" fill="#7860a8"/>
<path d="M153 0 H173 V64 L160 60 L152 44 L160 30 L154 14 Z" fill="#34323a"/>
<path d="M156 16 L173 12 V34 L160 36 Z" fill="#8c84ac"/>
<path d="M150 64 L173 58 V105 H158 L150 84 Z" fill="#bcb4dc"/>
<path d="M156 44 L173 40 V58 L160 62 Z" fill="#504c5c"/>
<!-- floating cubes -->
<g fill="#7860a8"><rect x="48" y="31" width="4" height="4" transform="rotate(20 50 33)"/><rect x="40" y="42" width="3" height="3"/><rect x="28" y="52" width="3" height="3" transform="rotate(30 29 53)"/><rect x="60" y="30" width="2.500" height="2.500"/><rect x="87" y="21" width="2.500" height="3.500" fill="#3c3470"/><rect x="143" y="49" width="3" height="4"/><rect x="148" y="9" width="3" height="3"/></g>
<g fill="#483c8c"><path d="M136 22 l6 2 l-1.500 4 l-6 -2 z"/><path d="M132 28 l6 2 l-1.500 4.500 l-6 -2 z"/></g>
<g fill="#8478a8"><path d="M126 38 l8 4 l-3 5 l-8 -4 z"/><path d="M130 46 l8 4 l-3 6 l-8 -4 z"/></g>
<circle cx="110" cy="19" r="4.500" fill="none" stroke="#e0f0ff" stroke-width="1"/>
<path d="M52 13 L68 8" stroke="#e8f0ff" stroke-width="1.500"/><path d="M33 6 L50 8" stroke="#9060e0" stroke-width="1.500"/>
<!-- platform -->
<path d="M10 105 L60 95 L88 92 L120 96 L158 105 Z" fill="#2a2c32"/>
<path d="M88 92 L120 96 L158 105 H88 Z" fill="#40444c"/>
<g fill="#38c8e8"><rect x="94" y="98" width="1.200" height="2"/><rect x="100" y="101" width="2" height="2"/><rect x="108" y="100" width="1.500" height="2"/><rect x="56" y="101" width="1.500" height="1.500" fill="#2890a0"/></g>
<!-- axel (left) -->
<path d="M30 88 L44 80 L57 84 L58 97 L40 100 L29 97 Z" fill="#34682c"/>
<rect x="29" y="86" width="6" height="10" fill="#282828"/><rect x="31" y="88" width="2" height="7" fill="#d8a888"/>
<path d="M31 75 L34 73 L56 86 L53 90 Z" fill="#3c3c40"/>
<rect x="43.500" y="66" width="11.500" height="11" fill="#e8b888"/><rect x="43.500" y="66" width="11.500" height="3.500" fill="#7c4828"/><rect x="48" y="73.500" width="4" height="2" fill="#703828"/>
<!-- petra -->
<path d="M60 70 L76 68 L82 78 L80 98 L62 98 L56 86 Z" fill="#8c94a4"/>
<path d="M57 82 L62 80 L64 96 L58 97 Z" fill="#d8a080"/>
<rect x="59" y="52" width="16" height="17" fill="#e8a070"/>
<path d="M59 52 H76 L82 58 L80 72 L74 70 L72 58 L59 58 Z" fill="#e88428"/>
<rect x="59" y="53" width="8" height="5" fill="#4890b4"/><path d="M62 64 h6" stroke="#b04838" stroke-width="1"/>
<!-- jesse -->
<path d="M76 58 L90 52 L108 54 L114 62 L106 72 L104 94 L80 95 L84 72 Z" fill="#b4b4be"/>
<path d="M88 70 L104 72 L106 95 L78 96 L82 80 Z" fill="#88a8d0"/>
<path d="M91 56 L89 78 M101 56 L99 78" stroke="#c83028" stroke-width="1.300"/>
<path d="M76 58 L84 60 L92 72 L86 76 Z" fill="#a8a8b4"/><path d="M84 68 L92 70 L90 80 L84 78 Z" fill="#e89838"/>
<path d="M106 60 L112 48 L120 52 L114 66 Z" fill="#9c9ca8"/><path d="M110 44 L118 40 L122 50 L114 54 Z" fill="#e89838"/>
<path d="M109 36 l3 -4 l3 3 l-2 5 z" fill="#f8d048"/><rect x="111" y="40" width="2.500" height="6" fill="#443830" transform="rotate(-20 112 43)"/>
<rect x="87.500" y="36" width="19" height="18" fill="#e89440"/>
<path d="M87 35 H106 L108 40 L106 50 L102 42 L87 42 Z" fill="#a03c20"/>
<rect x="91" y="43.500" width="2" height="1.500" fill="#38a048"/><rect x="99" y="43.500" width="2" height="1.500" fill="#38a048"/><rect x="93" y="48.500" width="6" height="2.500" fill="#803020"/><rect x="94" y="48.500" width="4" height="1" fill="#fff"/>
<!-- pig -->
<rect x="104" y="68" width="18" height="28" fill="#f0a8a0"/><path d="M103 68 L112 64 L120 68 L116 80 L104 78 Z" fill="#f0c058"/>
<rect x="110" y="68" width="12" height="14" fill="#f4b0a8"/><rect x="114" y="76" width="7" height="3" fill="#e08888"/><rect x="112" y="72" width="2" height="2" fill="#503030"/>
<rect x="106" y="86" width="12" height="10" fill="#e8a0a0"/>
<!-- right char -->
<path d="M124 78 L140 76 L142 92 L128 95 L122 88 Z" fill="#b82430"/>
<path d="M120 74 L126 76 L126 86 L120 82 Z" fill="#e0e0e4"/>
<rect x="126.500" y="62" width="16" height="15" fill="#c87428"/><path d="M126 62 H143 L144 68 L138 66 L126 67 Z" fill="#8c4418"/>
<rect x="131" y="70" width="8" height="3" fill="#fff"/><rect x="139" y="64" width="3" height="4" fill="#68a838"/>
<path d="M138 84 L148 94 L144 98 L136 90 Z" fill="#9c5c38"/>
<path d="M140 82 L150 78 L156 86 L154 92 L150 84 L146 96 L143 95 Z" fill="#38383c"/>
</g>
</svg>
<div class="lbl">Windows 8 Build 108400</div></div>
<div class="item" style="left:818px;top:171px"><svg style="width:172px" preserveAspectRatio="none" viewBox="0 0 173 105">
<defs>
<linearGradient id="t11_sky" x1="0" y1="0" x2="0" y2="1"><stop offset="0" stop-color="#68d4f4"/><stop offset="1" stop-color="#8ce0f8"/></linearGradient>
<linearGradient id="t11_grass" x1="0" y1="0" x2="1" y2="1"><stop offset="0" stop-color="#409838"/><stop offset="0.5" stop-color="#308430"/><stop offset="1" stop-color="#246c28"/></linearGradient>
<radialGradient id="t11_tul" cx="0.45" cy="0.3" r="0.75"><stop offset="0" stop-color="#e05870"/><stop offset="0.5" stop-color="#c43048"/><stop offset="0.85" stop-color="#7c2838"/><stop offset="1" stop-color="#4c3030"/></radialGradient>
<filter id="t11_bl"><feGaussianBlur stdDeviation="2"/></filter>
<filter id="t11_b2"><feGaussianBlur stdDeviation="0.600"/></filter>
</defs>
<rect width="173" height="105" fill="url(#t11_sky)"/>
<g filter="url(#t11_bl)">
<ellipse cx="18" cy="14" rx="24" ry="9" fill="#3ca4e8"/>
<path d="M-5 45 L20 34 L60 22 L112 14 L175 20 V110 H-5 Z" fill="url(#t11_grass)"/>
<path d="M10 38 L36 28 L62 19 L112 12 L114 30 L70 36 L40 44 L20 42 Z" fill="#d43c54"/>
<path d="M38 40 L52 34 L50 52 L42 50 Z" fill="#c83850"/>
<path d="M-5 56 L14 50 L22 70 L20 96 L-5 100 Z" fill="#988060"/>
<path d="M20 60 L60 50 L80 80 L50 100 L20 90 Z" fill="#54a84c" fill-opacity="0.6"/>
<path d="M60 70 L100 75 L110 100 L70 100 Z" fill="#2c7830" fill-opacity="0.7"/>
<path d="M130 50 L175 50 V100 H140 Z" fill="#348838" fill-opacity="0.8"/>
</g>
<g filter="url(#t11_b2)">
<path d="M120 40 L122 60 M140 44 L138 100 M163 48 L160 100 M122 90 L128 101" stroke="#2c7c2c" stroke-width="1.500" fill="none"/>
<path d="M140 101 C138 80 128 66 118 60 C128 74 130 88 132 101 Z" fill="#48a040"/>
<path d="M150 101 C152 84 160 70 170 62 C162 78 160 90 158 101 Z" fill="#3c9438"/>
<ellipse cx="122" cy="28" rx="8.500" ry="12.500" fill="url(#t11_tul)"/>
<ellipse cx="140" cy="28" rx="11" ry="15.500" fill="url(#t11_tul)"/>
<ellipse cx="165" cy="34" rx="9.500" ry="14" fill="url(#t11_tul)"/>
<ellipse cx="171" cy="12" rx="5" ry="8.500" fill="url(#t11_tul)"/>
<ellipse cx="121" cy="75" rx="13.500" ry="15" fill="url(#t11_tul)"/>
<ellipse cx="138" cy="56" rx="3" ry="5" fill="#d04058"/><ellipse cx="152" cy="50" rx="3.500" ry="6" fill="#c83850"/><ellipse cx="133" cy="48" rx="2.500" ry="4" fill="#d04058"/>
</g>
<!-- dialog -->
<rect x="60" y="22" width="53" height="46.500" fill="#f0f0f0"/>
<rect x="60" y="22" width="53" height="1.600" fill="#e4a8bc"/><rect x="80" y="21.800" width="12" height="0.800" fill="#444"/>
<path d="M69 26.600 L75.600 25.600 V32.200 L69 31.300 Z" fill="#28b8ec"/>
<text x="77.500" y="31.500" font-family="Liberation Sans, sans-serif" font-size="5.600" fill="#28b0e8">Windows 8</text>
<g fill="#333"><rect x="66" y="36" width="5" height="0.800" fill="#888"/><rect x="66" y="38" width="13" height="0.800" fill="#888"/><rect x="66" y="40.200" width="28" height="0.900"/><rect x="66" y="42.200" width="40" height="0.900"/><rect x="66" y="44.200" width="37" height="1.100"/><rect x="66" y="50" width="24" height="0.900"/><rect x="66" y="53.500" width="16" height="1" fill="#666"/></g>
<rect x="85" y="53.500" width="15" height="1" fill="#2878d0"/>
<rect x="103" y="64" width="8" height="2.800" fill="#e8e8e8" stroke="#999" stroke-width="0.300"/>
<!-- taskbar -->
<rect x="0" y="101" width="173" height="4" fill="#48a4c8"/><rect x="60" y="101" width="50" height="4" fill="#38b0cc" fill-opacity="0.6"/>
<rect x="4" y="101.500" width="3" height="3" fill="#f0e090"/><rect x="9" y="101.500" width="6" height="3" fill="#b8d0e0"/>
<g fill="#d8e8f0" fill-opacity="0.8"><rect x="157" y="96" width="15" height="0.800"/><rect x="157" y="98.500" width="15" height="0.800"/><rect x="158" y="102" width="3" height="2"/><rect x="165" y="102" width="2" height="2"/><rect x="170" y="101.500" width="1.500" height="3"/></g>
</svg>
<div class="lbl">Windows 8 Build 8400 ...</div></div>
<div class="item" style="left:1020px;top:171px"><svg preserveAspectRatio="none" viewBox="0 0 173 105">
<defs>
<radialGradient id="t12_bg" cx="0.3" cy="0.75" r="0.9"><stop offset="0" stop-color="#f82828"/><stop offset="0.35" stop-color="#f02018"/><stop offset="0.6" stop-color="#dc3418"/><stop offset="0.82" stop-color="#b84018"/><stop offset="1" stop-color="#8c3410"/></radialGradient>
<radialGradient id="t12_glow" cx="0.5" cy="0.5" r="0.5"><stop offset="0" stop-color="#ffd8d8" stop-opacity="0.9"/><stop offset="0.5" stop-color="#ff8080" stop-opacity="0.6"/><stop offset="1" stop-color="#ff4040" stop-opacity="0"/></radialGradient>
<filter id="t12_bl"><feGaussianBlur stdDeviation="1.200"/></filter>
</defs>
<rect width="173" height="105" fill="url(#t12_bg)"/>
<path d="M80 105 C110 85 140 70 173 55 V105 Z" fill="#f03c18" fill-opacity="0.85"/>
<ellipse cx="40" cy="68" rx="26" ry="46" transform="rotate(35 40 68)" fill="url(#t12_glow)"/><ellipse cx="36" cy="76" rx="13" ry="22" transform="rotate(35 36 76)" fill="#ffe4e4" fill-opacity="0.45" filter="url(#t12_bl)"/>
<path d="M0 105 C10 95 30 88 45 75 C52 68 58 50 62 38" stroke="#ffe0e0" stroke-width="0.500" fill="none" stroke-opacity="0.7"/>
<path d="M0 102 C20 92 60 96 90 94 C110 93 122 98 128 105" stroke="#fff" stroke-width="0.700" fill="none" stroke-opacity="0.8"/>
<path d="M12 105 C16 98 22 94 30 92" stroke="#fff" stroke-width="0.500" fill="none" stroke-opacity="0.7"/>
<path d="M22 90 L48 78" stroke="#8060e0" stroke-width="0.600" stroke-dasharray="1 2" stroke-opacity="0.7"/>
<g filter="url(#t12_bl)"><ellipse cx="88" cy="52" rx="22" ry="20" fill="#fff" fill-opacity="0.55"/></g>
<path d="M74 38 C79 34 84 34 88.500 37.500 L85.500 50 C81 47 76 47 71 50 Z" fill="#f8b040"/><path d="M76 39 C79 36 83 36 86 38.500 L84.500 45 C81 43 78 43 74.500 45 Z" fill="#fff0c0" fill-opacity="0.8"/>
<path d="M91.500 39 C96 42 102 41.500 107.500 38 L104 51 C99 54 93 54 88.500 51.500 Z" fill="#78b838"/><path d="M94 44 C97 45.500 100 45 103 43.500 L102 49 C99 51 95 51 92 50 Z" fill="#f0f8d0" fill-opacity="0.8"/>
<path d="M70.500 52.500 C75.500 49.500 80.500 49.500 85 52.500 L82 65.500 C77.500 62.500 72 62.500 66.500 66 Z" fill="#2c88e0"/><path d="M72 54 C76 52 80 52 83 54 L81.500 60 C78 58 74 58 70 60 Z" fill="#c8e8ff" fill-opacity="0.8"/>
<path d="M88 54 C92.500 57 98 57 103.500 54 L100 67.500 C95 70.500 89.500 70.500 85 67.500 Z" fill="#f8d828"/><path d="M90 56 C93 58 97 58 101 56.500 L99.500 62 C96 64 92 64 89 62 Z" fill="#fff8c0" fill-opacity="0.8"/>
<path d="M89.500 37 L84 68" stroke="#e83020" stroke-width="1.300"/><path d="M70 51.300 C76 48 82 48.500 87 51.500 C92 54.500 99 54.500 105 51" stroke="#e83020" stroke-width="1.300" fill="none"/>
</svg>
<div class="lbl">Windows 7 red core !!!!...</div></div>
<div class="item" style="left:8px;top:334px"><svg style="width:172px" preserveAspectRatio="none" viewBox="0 0 173 105">
<rect width="173" height="105" fill="#18a6f6"/>
<path d="M0 0 H151 L65 53 L0 60 Z" fill="#18a0f4"/>
<path d="M151 0 H157 L60 105 H0 V53 L65 53 Z" fill="#1eb0fc"/>
<path d="M157 0 H173 V47 L119 105 H60 Z" fill="#1aaaf8"/>
<path d="M173 47 V105 H119 Z" fill="#189cf0"/>
<path d="M157 66 L173 75 V47 Z" fill="#1aa4f4"/>
<g stroke="#0a1018" stroke-width="1" fill="none"><path d="M151 0 L64 53"/><path d="M157 0 L60 105" stroke-width="1.200"/><path d="M173 47 L119 105"/><path d="M157 66 L173 75"/></g>
<!-- start menu -->
<rect x="0" y="28.500" width="64.500" height="71" fill="#1874bc"/>
<rect x="0" y="81" width="28" height="5" fill="#3a8cd0"/>
<g fill="#b8d8f0"><rect x="0" y="31" width="3" height="0.900"/><rect x="0" y="38" width="8" height="0.900"/><rect x="0" y="43" width="5" height="0.900"/><rect x="0" y="48.500" width="7" height="0.900"/><rect x="0" y="54" width="8" height="0.900"/><rect x="0" y="60.500" width="7" height="0.900"/><rect x="0" y="66" width="6" height="0.900"/><rect x="0" y="72" width="5" height="0.900"/><rect x="0" y="77" width="3" height="0.900"/><rect x="0" y="83" width="3" height="0.900"/><rect x="0" y="90" width="5" height="0.900"/></g>
<rect x="0" y="94" width="28" height="4.500" fill="#f8fafc"/>
<rect x="30" y="29.600" width="7.300" height="7.300" fill="#1c90e4"/><rect x="38.500" y="29.600" width="7.300" height="7.300" fill="#e04828"/>
<rect x="30" y="38" width="7.300" height="7.300" fill="#c82838"/><rect x="38.500" y="38" width="7.300" height="7.300" fill="#1c78d0"/>
<rect x="47" y="29.600" width="16.200" height="16.200" fill="#2c88e0"/>
<rect x="30" y="47" width="15.800" height="16.200" fill="#e05030"/><rect x="47" y="47" width="16.200" height="16.200" fill="#7038b0"/>
<rect x="30" y="65" width="7.300" height="7" fill="#c82848"/><rect x="47" y="65" width="16.200" height="16" fill="#18a018"/>
<rect x="30" y="82" width="15.800" height="16.500" fill="#2090e8"/>
<g fill="#fff"><rect x="32.500" y="31.500" width="2" height="3.500"/><circle cx="42" cy="33.200" r="1.800" fill="none" stroke="#fff" stroke-width="0.700"/><rect x="32" y="40" width="3.500" height="3"/><path d="M40 42.500 l2 -2 l2 2 z"/><path d="M52 36 h6 v-3 l3 -1.500 v-2 h-5 v3 h-4 z"/><circle cx="36" cy="53" r="1.800"/><circle cx="40.500" cy="53.500" r="1.500"/><path d="M33 58 q3 -3.500 6 0 z"/><path d="M38.500 58 q2.500 -3 5 0 z"/><path d="M51 52 h8 v2 h-1.500 v4 h-1.500 v-3 h-2 v3 h-1.500 v-4 h-1.500 z"/><rect x="32" y="67.500" width="3.500" height="2.200"/><rect x="34.500" y="87.500" width="6.500" height="4.500" rx="0.500"/><rect x="49" y="67.500" width="11" height="0.800" fill-opacity="0.7"/><rect x="50" y="78" width="3" height="0.800"/></g>
<path d="M34.500 87.500 l3.250 2.500 l3.250 -2.500" stroke="#2090e8" stroke-width="0.500" fill="none"/>
<!-- taskbar -->
<rect x="0" y="99.500" width="173" height="5.500" fill="#2a88d0" fill-opacity="0.92"/>
<g fill="#e8f4fc"><rect x="2" y="101" width="2.500" height="2.500"/><rect x="10" y="101" width="3" height="2.500"/><rect x="27" y="101" width="3" height="2.500"/><rect x="144" y="100.800" width="4" height="3"/><rect x="153" y="101.500" width="2" height="1.500"/><rect x="159" y="101.500" width="2" height="1.500"/><rect x="166" y="101" width="6" height="1"/></g>
<path d="M18 104 l4 -3.500" stroke="#f8d048" stroke-width="1.200"/><rect x="35" y="100.500" width="3.500" height="4" fill="#18a048"/><rect x="36" y="101.500" width="1.500" height="2" fill="#fff"/>
<g fill="#d8ecfc"><rect x="153" y="93" width="19" height="0.900"/><rect x="155" y="96" width="17" height="0.900"/></g>
</svg>
<div class="lbl">Windows 10</div></div>
<div class="item" style="left:210px;top:334px"><svg preserveAspectRatio="none" viewBox="0 0 173 105">
<defs>
<linearGradient id="t14_ph1" x1="0" y1="0" x2="0" y2="1"><stop offset="0" stop-color="#a86828"/><stop offset="0.4" stop-color="#e89030"/><stop offset="0.6" stop-color="#788828"/><stop offset="1" stop-color="#c87820"/></linearGradient>
<linearGradient id="t14_ph2" x1="0" y1="0" x2="1" y2="1"><stop offset="0" stop-color="#4888c8"/><stop offset="0.5" stop-color="#88b8e0"/><stop offset="1" stop-color="#5898d0"/></linearGradient>
</defs>
<rect width="173" height="105" fill="#1a0a54"/>
<path d="M0 100 C20 90 40 104 60 98 C80 92 100 102 120 96 C140 90 160 100 173 94" stroke="#4028a0" stroke-width="0.600" fill="none"/>
<path d="M10 105 C30 96 50 100 70 104 M90 105 C110 94 120 80 140 84 C150 86 160 90 173 88" stroke="#3820a0" stroke-width="0.600" fill="none"/>
<text x="9" y="14" font-family="Liberation Sans, sans-serif" font-size="7.600" fill="#f4f4f8">Start</text>
<rect x="160" y="9.500" width="5" height="1" fill="#c8c8d8"/><rect x="168.500" y="8" width="4.500" height="5.500" fill="#f0f0f4"/>
<!-- row1 -->
<rect x="9.500" y="25" width="33.500" height="16.500" fill="#1890a0"/><rect x="44.600" y="25" width="33.500" height="16.500" fill="#6038b0"/>
<rect x="79.800" y="25" width="15.800" height="16.500" fill="#2878d8"/><rect x="97" y="25" width="16" height="16.500" fill="#10a010"/>
<rect x="121" y="25" width="34" height="16.500" fill="url(#t14_ph1)"/>
<!-- row2 -->
<rect x="9.500" y="43" width="33.500" height="16" fill="#d85030"/><rect x="44.600" y="43" width="33.500" height="16" fill="#1890a0"/>
<rect x="79.800" y="43" width="15.800" height="16" fill="#a010a8"/><rect x="97" y="43" width="16" height="16" fill="#1c60c8"/>
<rect x="121" y="43" width="34" height="16" fill="#1890a0"/>
<!-- row3 -->
<rect x="9.500" y="60.300" width="33.500" height="16.200" fill="#9c10a8"/><rect x="44.600" y="60.300" width="33.500" height="16.200" fill="#10a020"/>
<rect x="79.800" y="60.300" width="33.200" height="16.200" fill="#6038b0"/>
<rect x="121" y="60.300" width="16.200" height="16.200" fill="#10a020"/><rect x="138.800" y="60.300" width="16.200" height="16.200" fill="#a010a8"/>
<!-- row4 -->
<rect x="9.500" y="78" width="33.500" height="15.800" fill="url(#t14_ph2)"/><rect x="44.600" y="78" width="33.500" height="15.800" fill="#2878e0"/><rect x="62" y="78" width="16" height="15.800" fill="#4890e8" fill-opacity="0.6"/>
<rect x="79.800" y="78" width="33.200" height="15.800" fill="#c02038"/>
<rect x="121" y="78" width="16.200" height="15.800" fill="#e05828"/><rect x="138.800" y="78" width="16.200" height="15.800" fill="#c02038"/>
<g fill="#fff">
<rect x="22.500" y="29.500" width="7.500" height="5" rx="0.500"/><rect x="58.500" y="28.500" width="6" height="7" fill-opacity="0.85"/>
<text x="83" y="37" font-family="Liberation Serif, serif" font-style="italic" font-weight="bold" font-size="11" fill="#fff">e</text>
<path d="M102 31 h6 v6 h-6 z M103.500 31 q1.500 -3.500 3 0" fill="#fff" stroke="#fff" stroke-width="0.600"/>
<circle cx="24" cy="48.500" r="1.800"/><circle cx="28.500" cy="49" r="1.500"/><path d="M21 54 q3 -4 6 0 z"/><path d="M26.500 54 q2.500 -3.500 5 0 z"/>
<rect x="58" y="46.500" width="7" height="5" fill="none" stroke="#fff" stroke-width="0.900"/><rect x="56.500" y="52" width="10" height="1"/>
<path d="M84 47 h3 v6 h-3 z M88 46 h3 v7 h-3 z" /><path d="M101 53 q-2 -3 1.500 -3.500 q1 -3 4 -1.500 q3 -0.500 3.500 2.500 q2 0.500 0.500 2.500 z"/>
<rect x="133.500" y="47.500" width="9" height="6"/><path d="M136 47.500 v-1.500 h4 v1.500" fill="none" stroke="#fff" stroke-width="0.700"/>
<path d="M22.500 64.500 h7 v4.500 h-3 l-1.500 2 v-2 h-2.500 z"/>
<path d="M57 71 l1 -4 l2.500 -1 l2 2 l3 -4 v7 z"/><path d="M92 64.500 h8 l-2.500 3 h-3 z M95 68 h2 v3 h-2 z M93.500 71 h5 v1 h-5 z"/>
<path d="M125 70 q-1 -5 2 -5.500 h4 q3 0.500 2 5.500 l-2 -2 h-4 z"/><rect x="143" y="65" width="8" height="6"/>
<circle cx="61.500" cy="85.500" r="2"/><path d="M61.500 81.500 v8 M57.500 85.500 h8 M58.700 82.700 l5.600 5.600 M64.300 82.700 l-5.600 5.600" stroke="#fff" stroke-width="0.600"/>
<rect x="92.500" y="83" width="8" height="5.500"/>
<path d="M125.500 88 v-3 a3.500 3.500 0 0 1 7 0 v3" fill="none" stroke="#fff" stroke-width="1.100"/><rect x="124.500" y="86" width="2" height="3.500"/><rect x="131.500" y="86" width="2" height="3.500"/>
<rect x="142" y="82.500" width="10" height="6.500" fill="none" stroke="#fff" stroke-width="0.900"/><ellipse cx="147" cy="85.800" rx="2" ry="1.200"/>
</g>
<path d="M22.500 29.500 l3.750 3 l3.750 -3" stroke="#1890a0" stroke-width="0.600" fill="none"/>
<rect x="94" y="84.500" width="3" height="2.500" fill="#c02038"/><rect x="144.500" y="66.500" width="3" height="2.500" fill="#a010a8"/>
<ellipse cx="24" cy="83" rx="3" ry="2.200" fill="#f4f4f0"/><ellipse cx="31" cy="86" rx="2.500" ry="2" fill="#f0f0e8"/><circle cx="24" cy="83" r="0.900" fill="#e8c838"/>
<g fill="#fff" fill-opacity="0.6"><rect x="10.500" y="39" width="4" height="0.800"/><rect x="45.500" y="39" width="5" height="0.800"/><rect x="81" y="39" width="11" height="0.800"/><rect x="98" y="39" width="3" height="0.800"/><rect x="10.500" y="56.500" width="4" height="0.800"/><rect x="45.500" y="56.500" width="4" height="0.800"/><rect x="81" y="56.500" width="4" height="0.800"/><rect x="98" y="56.500" width="6" height="0.800"/><rect x="122" y="56.500" width="5" height="0.800"/><rect x="10.500" y="74" width="6" height="0.800"/><rect x="45.500" y="74" width="5" height="0.800"/><rect x="81" y="74" width="4" height="0.800"/><rect x="122" y="74" width="4" height="0.800"/><rect x="140" y="74" width="3" height="0.800"/><rect x="10.500" y="91.500" width="6" height="0.800"/><rect x="45.500" y="91.500" width="6" height="0.800"/><rect x="81" y="91.500" width="4" height="0.800"/><rect x="122" y="91.500" width="4" height="0.800"/><rect x="140" y="91.500" width="4" height="0.800"/></g>
</svg>
<div class="lbl">Windows 8 Start Menu ...</div></div>
<div class="item" style="left:413px;top:334px"><svg style="width:172px" preserveAspectRatio="none" viewBox="0 0 173 105">
<defs>
<linearGradient id="t15_r" x1="0" y1="0" x2="1" y2="1"><stop offset="0" stop-color="#f8a040"/><stop offset="0.5" stop-color="#e85820"/><stop offset="1" stop-color="#d83818"/></linearGradient>
<linearGradient id="t15_g" x1="0" y1="0" x2="1" y2="1"><stop offset="0" stop-color="#a8d870"/><stop offset="1" stop-color="#68a838"/></linearGradient>
<linearGradient id="t15_b" x1="0" y1="0" x2="1" y2="1"><stop offset="0" stop-color="#a8c8f0"/><stop offset="1" stop-color="#4878c8"/></linearGradient>
<linearGradient id="t15_y" x1="0" y1="0" x2="1" y2="1"><stop offset="0" stop-color="#f8e868"/><stop offset="0.6" stop-color="#f8c828"/><stop offset="1" stop-color="#f0a020"/></linearGradient>
<filter id="t15_bl"><feGaussianBlur stdDeviation="0.400"/></filter>
</defs>
<rect width="173" height="105" fill="#fff"/>
<g filter="url(#t15_bl)">
<path d="M9 33 C14 30 20 30 26 33 L22 49 C16 46 10 47 5 50 Z" fill="url(#t15_r)"/>
<path d="M29 35 C35 38 41 38 47 35 L42.500 52 C37 55 31 55 25 52 Z" fill="url(#t15_g)"/>
<path d="M4 53 C9 50 15 50 21 53 L17 68 C11 65 5 66 0.500 69 Z" fill="url(#t15_b)"/>
<path d="M24 55 C30 58 36 58 41.500 55.500 L37.500 71 C32 74 26 74 20 71 Z" fill="url(#t15_y)"/>
</g>
<text x="49.500" y="39" font-family="Liberation Sans, sans-serif" font-size="7.400" fill="#444" letter-spacing="0.450">Microsoft</text>
<text x="51" y="58.500" font-family="Liberation Sans, sans-serif" font-size="23.500" fill="#0a0a0a" letter-spacing="-0.500" stroke="#0a0a0a" stroke-width="0.400">Windows</text>
<text x="146" y="50" font-family="Liberation Sans, sans-serif" font-size="12.500" fill="#f07838" font-weight="bold" letter-spacing="-0.500">xp</text>
<text x="54.500" y="71.800" font-family="Liberation Sans, sans-serif" font-size="11.600" font-weight="bold" fill="#222" letter-spacing="0.080">Media Center Edition</text>
</svg>
<div class="lbl">Windows XP Media Ce...</div></div>
<div class="item" style="left:615px;top:334px"><svg preserveAspectRatio="none" viewBox="0 0 173 105">
<defs>
<clipPath id="t16_scr"><path d="M21.800 0 H153.700 V68 Q153.700 71.600 150 71.600 H25.500 Q21.800 71.600 21.800 68 Z"/></clipPath>
<filter id="t16_bl"><feGaussianBlur stdDeviation="0.500"/></filter>
</defs>
<rect width="173" height="105" fill="#fff"/>
<path d="M60 104.500 L72 94 H101 L116 104.500 Z" fill="#2c2c2c"/>
<ellipse cx="86" cy="100" rx="13" ry="4" fill="#141414"/>
<path d="M15 0 H160 V78 L147 95 H28 L15 78 Z" fill="#050505"/>
<path d="M17 0 H20 V72 H17 Z M155.500 0 H158.500 V72 H155.500 Z" fill="#30363a"/>
<path d="M20.800 0 V68 Q20.800 73 26 73 H150 Q155 73 155 68 V0" fill="none" stroke="#3a4044" stroke-width="1.200"/>
<g clip-path="url(#t16_scr)" filter="url(#t16_bl)">
<rect x="21" y="0" width="134" height="72" fill="#300408"/>
<path d="M84 28 L110 0 H154 V72 H66 L84 56 Z" fill="#8c0810"/>
<path d="M21.800 0 H135 L100 22 L84 28 L21.800 38.400 Z" fill="#6c3430"/>
<path d="M21.800 0 H118 L60 18 L21.800 32 Z" fill="#7c4840"/>
<path d="M21.800 0 H96 L50 12 L24 25 L21.800 26 Z" fill="#8c5c58"/>
<path d="M22 0 H50 L24 8 Z" fill="#948060"/>
<path d="M84 34 H112 L118 56 L100 72 H84 Z" fill="#781010"/>
<circle cx="118" cy="11.500" r="8" fill="#982838"/><circle cx="118" cy="11.500" r="5" fill="#c02048"/><circle cx="119" cy="12" r="3" fill="#d81c1c"/>
<circle cx="132" cy="30" r="12" fill="#980810"/>
<circle cx="95" cy="41" r="10" fill="#a00c14"/><circle cx="95" cy="41" r="7" fill="#b80c14"/>
<circle cx="99" cy="65" r="9" fill="#a00c14"/><circle cx="99" cy="65" r="6" fill="#c41018"/>
<circle cx="140" cy="52" r="16" fill="#b80c14"/><circle cx="140" cy="51" r="13" fill="#dc1418"/><circle cx="141" cy="51" r="10.500" fill="#f4181c"/>
<path d="M66.700 68.700 C95 55 118 38 126 23 C132 12 138 5 141 0" stroke="#e81820" stroke-width="1.300" fill="none"/>
<path d="M97 68.700 C110 58 120 45 123 33 C126 20 128 8 129.700 0" stroke="#e01820" stroke-width="1" fill="none"/>
<path d="M104 70 C118 58 124 44 128 30" stroke="#c81018" stroke-width="0.700" fill="none"/>
<g fill="#e82028"><circle cx="114" cy="45" r="1"/><circle cx="107" cy="54" r="0.800"/><circle cx="111" cy="52" r="0.600"/><circle cx="117" cy="29" r="0.800"/></g>
</g>
<path d="M56 80 H118 V86 Q118 93 110 93 H64 Q56 93 56 86 Z" fill="#1c1c1c"/>
<path d="M57.500 81 H116.500 V86 Q116.500 91.500 110 91.500 H64 Q57.500 91.500 57.500 86 Z" fill="#0a0a0a"/>
<rect x="70" y="86.800" width="36" height="2.300" fill="#b8b8b8"/><rect x="70" y="86.800" width="36" height="0.800" fill="#e8e8e8"/>
<circle cx="135.800" cy="82.500" r="1.400" fill="#c81010"/>
</svg>
<div class="lbl">OS 7.1</div></div>
<div class="item" style="left:818px;top:334px"><svg style="width:172px" preserveAspectRatio="none" viewBox="0 0 173 105">
<defs>
<linearGradient id="t17_hd" x1="0" y1="0" x2="0" y2="1"><stop offset="0" stop-color="#70767c"/><stop offset="0.5" stop-color="#555b62"/><stop offset="1" stop-color="#4a5058"/></linearGradient>
<filter id="t17_bl"><feGaussianBlur stdDeviation="0.600"/></filter>
</defs>
<rect width="173" height="105" fill="#98d030"/>
<g filter="url(#t17_bl)">
<path d="M0 0 H35 L40 22 H0 Z" fill="#a8d838"/><path d="M18 0 L30 0 L24 14 Z" fill="#1c6820"/>
<path d="M30 0 H60 L50 25 L38 22 Z" fill="#b4dc50"/>
<path d="M40 8 L48 6 L50 22 L44 24 Z" fill="#4888c8"/><path d="M36 12 L44 8 L44 20 Z" fill="#e0d070"/>
<path d="M48 0 H90 L80 20 L60 28 L50 22 Z" fill="#88c828"/>
<path d="M62 6 L86 4 L100 16 L96 34 L80 36 L66 26 Z" fill="#1c6c24"/><path d="M60 6 L76 10 L74 20 L62 16 Z" fill="#2c8030"/>
<path d="M64 30 L100 24 L112 50 L100 70 L70 80 L64 60 Z" fill="#a4d838"/>
<path d="M72 34 L76 30 L74 50 L70 56 Z" fill="#38882c"/>
<path d="M100 0 H147 V40 L130 44 L112 30 L104 14 Z" fill="#1c6424"/>
<path d="M108 0 L128 0 L124 20 L112 16 Z" fill="#88c830"/><path d="M130 6 L147 4 V30 L134 34 Z" fill="#68b028"/>
<path d="M112 34 L147 36 V66 L124 64 L114 50 Z" fill="#b4dc48"/><path d="M128 34 L140 36 L136 44 Z" fill="#e8d880"/>
<path d="M64 76 L100 70 L118 66 L130 80 L120 105 H64 Z" fill="#90cc30"/>
<path d="M64 88 L74 90 L72 105 H64 Z" fill="#1c6020"/>
<path d="M86 88 L100 84 L104 96 L98 105 H88 Z" fill="#88c4e0"/><path d="M82 76 L96 74 L92 88 L84 90 Z" fill="#b0e090"/>
<path d="M98 96 L124 82 L134 90 L130 105 H98 Z" fill="#78c028"/>
<path d="M132 62 L147 64 V84 L138 80 Z" fill="#4890d0"/><path d="M134 84 L147 86 V105 H130 Z" fill="#1c6424"/>
<path d="M112 60 L128 64 L124 76 L112 72 Z" fill="#b8e050"/>
</g>
<g fill="none" stroke="#14140c" stroke-linecap="round">
<path d="M90 0 C98 8 106 18 110 30 C114 44 116 54 118 62" stroke-width="3.400"/>
<path d="M118 62 C108 66 96 74 84 78 C76 80 70 80 64 80" stroke-width="2.600"/>
<path d="M118 62 C128 70 138 78 147 86" stroke-width="3"/>
<path d="M56 1 C68 5 80 5 90 4" stroke-width="1.600"/>
<path d="M33 0 C34 8 35 16 36 22" stroke-width="1"/>
<path d="M132 40 C138 42 142 46 147 50" stroke-width="1"/>
</g>
<!-- sidebar -->
<rect x="147" y="0" width="26" height="105" fill="#42464a"/><rect x="147" y="0" width="6" height="105" fill="#50545a"/>
<rect x="147" y="6" width="26" height="0.500" fill="#666"/><rect x="147" y="101" width="26" height="0.500" fill="#666"/>
<g fill="#b8c0c8"><rect x="148" y="2" width="3" height="3"/><rect x="152.500" y="2" width="3.500" height="3.500"/><rect x="158" y="8" width="2" height="2" fill="#e89838"/><rect x="162" y="8" width="2" height="2" fill="#e8f0f8"/><rect x="149.500" y="8" width="1.500" height="2" fill="#3868c0"/></g>
<rect x="148.500" y="19" width="2.500" height="6" fill="#e8d0b0"/><rect x="149.200" y="20" width="1" height="3" fill="#d02020"/>
<rect x="152.500" y="19" width="17" height="3" fill="#58b040"/><rect x="152.500" y="19" width="8" height="3" fill="#88d850"/>
<rect x="154" y="23.500" width="14" height="1.500" fill="#d0d4d8"/>
<path d="M158 105 l3 -3 l3 0 l3 3 z" fill="#c8ccd0"/>
<!-- start menu -->
<rect x="0" y="22" width="64" height="83" fill="#fff"/>
<rect x="31.500" y="32.500" width="32.500" height="72.500" fill="#fdf6e4"/>
<rect x="0" y="22" width="64" height="10.500" fill="url(#t17_hd)"/><rect x="0" y="22" width="0.600" height="83" fill="#888"/>
<rect x="2" y="23.500" width="7.500" height="8" fill="#e8e8e8" stroke="#fff" stroke-width="0.500"/><path d="M5 25 l1.500 2 l-1 2 l1.500 1.500" stroke="#777" stroke-width="0.700" fill="none"/>
<rect x="12" y="26.500" width="18" height="1.800" fill="#f4f4f4"/>
<circle cx="4.500" cy="37.500" r="2.600" fill="#e86820"/><path d="M2.500 38 a2.300 2.300 0 0 0 4.300 0 z" fill="#3868c8"/>
<circle cx="4.500" cy="44" r="2.400" fill="#c8c8cc"/><path d="M2.500 55 l2 -4 l1 3 l1.500 -3.500 v6 z" fill="#e8a020"/><path d="M2.500 55 l2 -4 l0 5 z" fill="#3070d0"/>
<circle cx="4.500" cy="58.500" r="2.500" fill="#e83828"/><circle cx="4.500" cy="58.500" r="1.200" fill="#f8d838"/><path d="M2 59 a2.500 2.500 0 0 0 5 0 z" fill="#38a040" fill-opacity="0.800"/>
<path d="M2.500 67 l2 -4 l2.500 4 z" fill="#3878d0"/><rect x="3" y="66" width="3.500" height="1.500" fill="#58a848"/>
<path d="M2.500 73 l3 -4 l1 1.500 l-2.500 3.500 z" fill="#3868d0"/>
<g fill="#333"><rect x="8.500" y="36" width="7" height="1"/><rect x="8.500" y="38.500" width="10" height="0.800" fill="#777"/><rect x="8.500" y="42.500" width="5" height="1.200"/><rect x="8.500" y="45.500" width="11" height="0.800" fill="#999"/><rect x="8.500" y="51" width="9" height="1"/></g>
<g fill="#3878c8"><rect x="8.500" y="57.500" width="17" height="1"/><rect x="8.500" y="64.500" width="15" height="1.100"/><rect x="8.500" y="71" width="13" height="0.900"/></g>
<rect x="8" y="103" width="10" height="1.200" fill="#555"/><path d="M22 101 l1 3.500" stroke="#444" stroke-width="0.600"/>
<g><rect x="34" y="36" width="3" height="2" fill="#e0e4e8"/><rect x="34" y="40.500" width="3" height="2.500" fill="#a8c8e8"/><rect x="34" y="45" width="3" height="3" fill="#a05828"/><rect x="34" y="50.500" width="3" height="2.500" fill="#e8e8e8"/><rect x="34" y="55" width="3" height="3" fill="#f0d868"/><rect x="34" y="60.500" width="3" height="3" fill="#505868"/><rect x="34" y="65" width="3" height="3" fill="#4868c0"/><rect x="34" y="70.500" width="3" height="3" fill="#d8dce0"/><rect x="34" y="75.500" width="3" height="3" fill="#e85030"/><rect x="34" y="81" width="3" height="2.500" fill="#a0a8b0"/><rect x="34" y="85.500" width="3" height="3" fill="#4870c0"/><circle cx="35.500" cy="93" r="1.800" fill="#2848b8"/><rect x="34" y="97" width="3" height="2" fill="#d0d8e0"/><rect x="34" y="102" width="3" height="2.500" fill="#888"/></g>
<g fill="#444"><rect x="38.500" y="36" width="10" height="1"/><rect x="38.500" y="41" width="12" height="1"/><rect x="38.500" y="46" width="16" height="1"/><rect x="38.500" y="51" width="7" height="1"/><rect x="38.500" y="56" width="6" height="1"/><rect x="38.500" y="61" width="5" height="1"/><rect x="38.500" y="66" width="9" height="1"/><rect x="38.500" y="72" width="9" height="1"/><rect x="38.500" y="76" width="19" height="1"/><rect x="38.500" y="82" width="14" height="1"/><rect x="38.500" y="87" width="17" height="1"/><rect x="38.500" y="93" width="12" height="1" fill="#887"/><rect x="38.500" y="98" width="5" height="1"/><rect x="38.500" y="103" width="3" height="1"/></g>
<!-- desktop icon -->
<path d="M5 4 l2 -1.500 l1 1 l-1 3 l-2.500 0.500 z" fill="#e84820"/><rect x="4" y="6" width="3.500" height="2" fill="#3868d0"/><rect x="1" y="9.500" width="10" height="1" fill="#333"/>
</svg>
<div class="lbl">Windows 12 Plus</div></div>
<div class="item" style="left:1020px;top:334px"><svg preserveAspectRatio="none" viewBox="0 0 173 105">
<rect width="173" height="105" fill="#fff"/>
<g transform="scale(1.25 1.2)">
<path d="M0.500 0.500 H11.500 L15.500 4.500 V15.500 H0.500 Z" fill="#fdfdfd" stroke="#a8a8a8" stroke-width="1"/>
<path d="M11.500 0.500 V4.500 H15.500" fill="#e8e8e8" stroke="#a8a8a8" stroke-width="1"/>
<rect x="2" y="2" width="11" height="11" fill="#c8dcf0"/>
<circle cx="5" cy="5" r="1.500" fill="#fff"/>
<path d="M2 13 Q5 6.500 9.500 9 L13 13 Z" fill="#58a848"/>
<path d="M9 15.500 L15.500 9 V15.500 Z" fill="#fff"/><path d="M9 15.500 L15.500 9" stroke="#a8a8a8" stroke-width="1"/>
</g>
<text x="20.600" y="13.600" font-family="Liberation Sans, sans-serif" font-size="15.200" fill="#000" letter-spacing="-0.250">Windows 7 Gaming</text>
<text x="20.600" y="30.600" font-family="Liberation Sans, sans-serif" font-size="15.200" fill="#000" letter-spacing="-0.250">Theme</text>
</svg>
<div class="lbl">Windows 7 Gaming Th...</div></div>
<div class="item" style="left:8px;top:498px"><svg style="width:172px" preserveAspectRatio="none" viewBox="0 0 173 105">
<defs>
<linearGradient id="t19_bg" x1="0" y1="0.500" x2="1" y2="0.300"><stop offset="0" stop-color="#9ccef0"/><stop offset="0.08" stop-color="#4c88d8"/><stop offset="0.2" stop-color="#1c44a8"/><stop offset="0.8" stop-color="#183a98"/><stop offset="1" stop-color="#122c84"/></linearGradient>
<linearGradient id="t19_bg2" x1="0" y1="0" x2="0" y2="1"><stop offset="0" stop-color="#1c58c0" stop-opacity="0.9"/><stop offset="0.5" stop-color="#78b0e8" stop-opacity="0.3"/><stop offset="1" stop-color="#c8e4f8" stop-opacity="0.9"/></linearGradient>
</defs>
<rect width="173" height="105" fill="url(#t19_bg)"/>
<rect x="0" y="0" width="20" height="105" fill="url(#t19_bg2)"/>
<rect x="19" y="4.500" width="135" height="95.500" fill="#ececec" stroke="#b4b8c0" stroke-width="0.800"/>
<rect x="19" y="100" width="135" height="5" fill="#e4e6ea"/>
<rect x="43.500" y="11" width="86" height="5.500" fill="#fafafa" stroke="#ddd" stroke-width="0.300"/><rect x="48" y="13.300" width="28" height="1" fill="#999"/>
<rect x="43.500" y="26" width="19" height="1.100" fill="#555"/><rect x="120" y="24.500" width="9" height="3" fill="#fafafa"/>
<g>
<circle cx="47" cy="37" r="2.800" fill="#e04818"/><circle cx="66.500" cy="37" r="2.800" fill="#2c88d8"/><circle cx="86" cy="37" r="2.800" fill="#485878"/><rect x="103.500" y="34" width="4.500" height="6" fill="#5888c8"/><path d="M123 37 l2 2 l3.500 -4" stroke="#3878e0" stroke-width="1.500" fill="none"/>
<rect x="44.500" y="47.500" width="5.500" height="5" fill="#e83848"/><circle cx="66.500" cy="50.500" r="2.800" fill="#f8a020"/><rect x="84" y="47.500" width="5" height="6" fill="#2860c0"/><rect x="103" y="47.500" width="6" height="6" fill="#202428"/><rect x="123" y="47.500" width="6" height="6" fill="#f8c030"/><rect x="124" y="50" width="4" height="3.500" fill="#3880d8"/>
<rect x="44.500" y="61" width="5" height="6" fill="#f4f4f4" stroke="#888" stroke-width="0.500"/><path d="M65 66 l1.500 -5 l2 1.500 l-1 4 z" fill="#e04818"/><rect x="64.500" y="65" width="3" height="2.500" fill="#2868c8"/><circle cx="86" cy="64" r="2.800" fill="#fff" stroke="#2878d8" stroke-width="1"/><rect x="103" y="61.500" width="6" height="5" fill="#8898a8"/><path d="M122.500 62 l3.500 -1.500 l3.500 1.500 v3 l-3.500 2.500 l-3.500 -2.500 z" fill="#2880e0"/>
</g>
<g fill="#888"><rect x="42" y="41.800" width="10" height="0.800"/><rect x="62" y="41.800" width="9" height="0.800"/><rect x="83" y="41.800" width="6" height="0.800"/><rect x="103" y="41.800" width="5" height="0.800"/><rect x="124" y="41.800" width="3" height="0.800"/><rect x="45" y="55" width="4" height="0.800"/><rect x="64" y="55" width="5" height="0.800"/><rect x="84" y="55" width="5" height="0.800"/><rect x="101" y="55" width="10" height="0.800"/><rect x="124" y="55" width="3" height="0.800"/><rect x="42" y="69" width="10" height="0.800"/><rect x="62" y="69" width="10" height="0.800"/><rect x="84" y="69" width="4" height="0.800"/><rect x="103" y="69" width="6" height="0.800"/><rect x="120" y="69" width="11" height="0.800"/></g>
<rect x="43.500" y="78.500" width="6" height="1" fill="#666"/>
<g fill="#777"><rect x="50" y="83.200" width="12" height="1"/><rect x="80" y="83.200" width="14" height="1"/><rect x="111" y="83.200" width="12" height="1"/><rect x="50" y="90.500" width="14" height="1"/><rect x="80" y="90" width="11" height="1"/><rect x="80" y="92.200" width="15" height="0.700" fill="#aaa"/><rect x="111" y="90" width="8" height="1"/><rect x="111" y="92.200" width="10" height="0.700" fill="#aaa"/></g>
<rect x="43.500" y="83" width="2.500" height="2.500" fill="#d83828"/><rect x="74" y="82.500" width="3" height="3" fill="#88a8c8"/><rect x="104.500" y="83" width="2.500" height="2.500" fill="#3060b8"/><rect x="43.500" y="90" width="2.500" height="2.500" fill="#207838"/><rect x="74" y="89.500" width="3" height="3" fill="#4888d0"/><rect x="104.500" y="89.500" width="2.500" height="3.500" fill="#fafafa" stroke="#ccc" stroke-width="0.300"/>
<rect x="75.500" y="101.500" width="2.500" height="2.500" fill="#2878d8"/><rect x="82" y="101.500" width="2.500" height="2.500" fill="#555"/><circle cx="89.500" cy="102.800" r="1.500" fill="#2888d8"/><rect x="95" y="101.500" width="2" height="2" fill="#334"/>
<rect x="143" y="103" width="9" height="0.800" fill="#888"/>
</svg>
<div class="lbl">Windows 10X</div></div>
<div class="item" style="left:210px;top:498px"><svg preserveAspectRatio="none" viewBox="0 0 173 105">
<rect width="173" height="105" fill="#fff"/>
<g transform="scale(1.25 1.2)">
<path d="M0.500 0.500 H11.500 L15.500 4.500 V15.500 H0.500 Z" fill="#fdfdfd" stroke="#a8a8a8" stroke-width="1"/>
<path d="M11.500 0.500 V4.500 H15.500" fill="#e8e8e8" stroke="#a8a8a8" stroke-width="1"/>
<rect x="2" y="2" width="11" height="11" fill="#c8dcf0"/>
<circle cx="5" cy="5" r="1.500" fill="#fff"/>
<path d="M2 13 Q5 6.500 9.500 9 L13 13 Z" fill="#58a848"/>
<path d="M9 15.500 L15.500 9 V15.500 Z" fill="#fff"/><path d="M9 15.500 L15.500 9" stroke="#a8a8a8" stroke-width="1"/>
</g>
<text x="20.600" y="13.600" font-family="Liberation Sans, sans-serif" font-size="15.200" fill="#000" letter-spacing="-0.250">Windows 10 Pro</text>
</svg>
<div class="lbl">Windows 10 Pro</div></div>
<div class="item" style="left:413px;top:498px"><svg style="width:172px" preserveAspectRatio="none" viewBox="0 0 173 105">
<defs>
<radialGradient id="t21_bg" cx="0.8" cy="0.5" r="0.9"><stop offset="0" stop-color="#0c4890"/><stop offset="0.35" stop-color="#07346c"/><stop offset="0.7" stop-color="#04244e"/><stop offset="1" stop-color="#031838"/></radialGradient>
<linearGradient id="t21_beam" x1="1" y1="0" x2="0" y2="0"><stop offset="0" stop-color="#3c9cf8" stop-opacity="0.95"/><stop offset="0.35" stop-color="#2078d8" stop-opacity="0.65"/><stop offset="1" stop-color="#1660b8" stop-opacity="0.3"/></linearGradient>
<filter id="t21_bl"><feGaussianBlur stdDeviation="1.500"/></filter>
</defs>
<rect width="173" height="105" fill="url(#t21_bg)"/>
<g filter="url(#t21_bl)">
<path d="M158 26 L60 10 L0 16 L0 48 L134 49 Z" fill="url(#t21_beam)" fill-opacity="0.34"/>
<path d="M134 36 L0 28 V48 L134 49 Z" fill="url(#t21_beam)" fill-opacity="0.36"/>
<path d="M158 76 L60 94 L0 86 L0 56 L134 55 Z" fill="url(#t21_beam)" fill-opacity="0.34"/>
<path d="M134 68 L0 74 V56 L134 55 Z" fill="url(#t21_beam)" fill-opacity="0.32"/>
<path d="M158 26 L173 22 V82 L158 76 Z" fill="#1c68c4" fill-opacity="0.2"/>
</g>
<rect x="0" y="50.800" width="158" height="2.400" fill="#082c62" fill-opacity="0.9"/>
<path d="M135.500 34 V50.800 H158 V27 Z" fill="#48acf8" fill-opacity="0.7"/>
<path d="M135.500 53.500 H158 V75 L135.500 70 Z" fill="#48acf8" fill-opacity="0.7"/>
<path d="M133 34 V50.800 M133 53.500 V70" stroke="#e0f0ff" stroke-width="1"/><path d="M135.500 34 V50.800 M135.500 53.500 V70" stroke="#a8d0f8" stroke-width="0.600"/>
<path d="M114 37.500 h18 M114 67.500 h18" stroke="#b8dcff" stroke-width="0.600" stroke-opacity="0.7"/>
<!-- tux -->
<ellipse cx="147" cy="56" rx="11" ry="16" fill="#0a0a0c"/>
<ellipse cx="147.500" cy="47" rx="7" ry="7.500" fill="#0a0a0c"/>
<ellipse cx="147.500" cy="62" rx="7.500" ry="11" fill="#f8f8f8"/>
<ellipse cx="145" cy="45.500" rx="1.700" ry="2.200" fill="#fff"/><ellipse cx="150" cy="45.500" rx="1.700" ry="2.200" fill="#fff"/>
<circle cx="145.300" cy="46" r="0.800" fill="#111"/><circle cx="149.700" cy="46" r="0.800" fill="#111"/>
<path d="M143.500 50 Q147.500 47.500 151.500 50 Q147.500 53.500 143.500 50 Z" fill="#f0a818"/>
<path d="M136 66 C137 58 140 54 142 52 C140 60 140 68 139 73 Z M158 66 C157 58 154 54 152 52 C154 60 155 68 156 73 Z" fill="#0a0a0c"/>
<path d="M153 72 l5 1 l-1 2 l-5 -1 z" fill="#f0a818"/>
</svg>
<div class="lbl">windows xp g̣̈ḷ̈ị̈ṭ̈c̣̈ḥ̈</div></div>
<div class="item" style="left:615px;top:498px"><svg preserveAspectRatio="none" viewBox="0 0 173 105">
<defs>
<filter id="t22_bl" x="-20%" y="-20%" width="140%" height="140%"><feGaussianBlur stdDeviation="4"/></filter>
<linearGradient id="t22_r" x1="0" y1="0" x2="0" y2="1"><stop offset="0" stop-color="#e83c20"/><stop offset="1" stop-color="#f07820"/></linearGradient>
<linearGradient id="t22_y" x1="0" y1="0" x2="0" y2="1"><stop offset="0" stop-color="#f8e830"/><stop offset="1" stop-color="#f8b820"/></linearGradient>
</defs>
<rect width="173" height="105" fill="#c4d8ee"/>
<g filter="url(#t22_bl)">
<ellipse cx="20" cy="10" rx="22" ry="8" fill="#a8c4e8"/><ellipse cx="60" cy="12" rx="22" ry="10" fill="#e8f0f8"/><ellipse cx="115" cy="14" rx="20" ry="9" fill="#9cbce4"/><ellipse cx="160" cy="18" rx="14" ry="10" fill="#e0ecf8"/>
<ellipse cx="12" cy="40" rx="14" ry="14" fill="#dce8f4"/><ellipse cx="38" cy="40" rx="14" ry="10" fill="#a4c0e4"/><ellipse cx="140" cy="45" rx="22" ry="16" fill="#e4eef8"/><ellipse cx="165" cy="55" rx="12" ry="14" fill="#a8c4e8"/>
<ellipse cx="25" cy="75" rx="22" ry="12" fill="#b4cce8"/><ellipse cx="60" cy="92" rx="28" ry="10" fill="#e4eef8"/><ellipse cx="100" cy="60" rx="30" ry="20" fill="#e0eaf6"/><ellipse cx="120" cy="95" rx="30" ry="10" fill="#b0c8e8"/><ellipse cx="160" cy="90" rx="16" ry="12" fill="#d8e6f4"/>
</g>
<!-- flag -->
<path d="M87.700 27.800 C98 26 110 29 119.200 36 L104.600 74.500 C96 67 84 63 73.700 62.900 Z" fill="#0c0c0c"/>
<path d="M91 31.500 C94.500 31 98.500 32 101.800 34 L97.800 45 C94.500 43.300 90.500 42.700 86.800 43 Z" fill="url(#t22_r)"/>
<path d="M104.500 35 C107.500 36.500 110.500 38.500 113 41 L108.800 52 C106.500 49.800 103.500 47.800 100.500 46.300 Z" fill="#78c848"/>
<path d="M85.800 46.500 C89.500 46.200 93.500 46.800 96.800 48.500 L92.700 60 C89.500 58.500 85.500 58 81.500 58.300 Z" fill="#3868b8"/>
<path d="M99.500 50 C102.500 51.500 105.500 53.500 107.800 55.800 L103.500 67.500 C101 65 98 63 95.200 61.500 Z" fill="url(#t22_y)"/>
<g fill="#101010"><path d="M82 28.500 l4 -0.500 l-1.500 4 l-4 0.500 z"/><path d="M77 34 l3.500 -0.300 l-1.300 3.500 l-3.500 0.300 z" fill="#e85820"/><path d="M80 38.500 l4 -0.400 l-1.500 4 l-4 0.400 z"/><path d="M75.500 43.500 l3.500 -0.300 l-1.300 3.500 l-3.500 0.300 z" fill="#f08020"/><path d="M78 48.500 l4 -0.400 l-1.500 4 l-4 0.400 z"/><path d="M73 53 l3.500 -0.300 l-1.300 3.500 l-3.500 0.300 z" fill="#2868c0"/><path d="M75.500 58 l4 -0.300 l-1.500 4 l-4 0.300 z"/>
<path d="M76 27 l3 -0.300 l-1 3 l-3 0.300 z"/><path d="M72 31.500 l3 -0.300 l-1 3 l-3 0.300 z" fill="#e85020"/><path d="M74 36.500 l3 -0.300 l-1 3 l-3 0.300 z"/><path d="M70 41 l3 -0.300 l-1 3 l-3 0.300 z" fill="#f08828"/><path d="M72 46 l3 -0.300 l-1 3 l-3 0.300 z"/><path d="M68 50.500 l3 -0.300 l-1 3 l-3 0.300 z" fill="#2c70c8"/><path d="M70 55.500 l3 -0.300 l-1 3 l-3 0.300 z"/><path d="M69 60.500 l3.500 -0.300 l-1 3 l-3.500 0.300 z"/>
<path d="M71 24.500 l2.500 -0.200 l-0.800 2.400 l-2.500 0.200 z"/><path d="M67.500 29 l2.500 -0.200 l-0.800 2.400 l-2.500 0.200 z" fill="#e86030"/><path d="M68.500 34 l2.500 -0.200 l-0.800 2.400 l-2.500 0.200 z"/><path d="M65 38.500 l2.500 -0.200 l-0.800 2.400 l-2.500 0.200 z" fill="#f09030"/><path d="M66 43.500 l2.500 -0.200 l-0.800 2.400 l-2.500 0.200 z"/><path d="M62.500 48 l2.500 -0.200 l-0.800 2.400 l-2.500 0.200 z" fill="#3070c8"/><path d="M64 53 l2.500 -0.200 l-0.800 2.400 l-2.500 0.200 z"/><path d="M64 58 l3 -0.200 l-0.800 2.400 l-3 0.200 z"/>
<path d="M67 21 l2 -0.200 l-0.600 2 l-2 0.200 z"/><path d="M63 26 l2 -0.200 l-0.600 2 l-2 0.200 z" fill="#e87040"/><path d="M63.500 31 l2 -0.200 l-0.600 2 l-2 0.200 z" fill="#555"/><path d="M60 36 l2 -0.200 l-0.600 2 l-2 0.200 z" fill="#f0a050"/><path d="M61 41 l2 -0.200 l-0.600 2 l-2 0.200 z" fill="#555"/><path d="M58 46 l2 -0.200 l-0.600 2 l-2 0.200 z" fill="#4080d0"/><path d="M59 50.500 l2 -0.200 l-0.600 2 l-2 0.200 z" fill="#555"/><path d="M59 55 l2.500 -0.200 l-0.600 2 l-2.500 0.200 z" fill="#333"/>
<path d="M66 17.500 l1.600 -0.200 l-0.500 1.600 l-1.600 0.200 z" fill="#555"/><path d="M56 44 l1.600 -0.200 l-0.500 1.600 l-1.600 0.200 z" fill="#5090d8"/><path d="M54.500 50 l1.600 -0.200 l-0.500 1.600 l-1.600 0.200 z" fill="#777"/><path d="M58.500 33 l1.600 -0.200 l-0.500 1.600 l-1.600 0.200 z" fill="#f0b070"/></g>
<text x="40" y="77.800" font-family="Liberation Sans, sans-serif" font-style="italic" font-size="7.800" fill="#181818" letter-spacing="-0.100">Microsoft</text>
<text x="44.500" y="89" font-family="Liberation Sans, sans-serif" font-weight="bold" font-size="14.800" fill="#080808" stroke="#080808" stroke-width="0.600" letter-spacing="0.950">Windows</text>
<text x="118.500" y="89" font-family="Liberation Sans, sans-serif" font-size="14.200" fill="#181818" letter-spacing="-0.600">98</text>
</svg>
<div class="lbl">Windows 98 2024 Editi...</div></div>
<div class="item" style="left:818px;top:498px"><svg style="width:172px" preserveAspectRatio="none" viewBox="0 0 173 105">
<defs>
<linearGradient id="t23_gr" x1="0" y1="0" x2="0" y2="1"><stop offset="0" stop-color="#88d838"/><stop offset="0.55" stop-color="#48b020"/><stop offset="0.85" stop-color="#389818"/><stop offset="1" stop-color="#f8e868"/></linearGradient>
<linearGradient id="t23_bl" x1="0" y1="0" x2="0" y2="1"><stop offset="0" stop-color="#58d0f8"/><stop offset="0.55" stop-color="#2898f0"/><stop offset="0.85" stop-color="#1c78d8"/><stop offset="1" stop-color="#a8e0f8"/></linearGradient>
<linearGradient id="t23_pu" x1="0" y1="0" x2="0" y2="1"><stop offset="0" stop-color="#f0a8f0"/><stop offset="0.55" stop-color="#b878f0"/><stop offset="0.85" stop-color="#7858e0"/><stop offset="1" stop-color="#f8e868"/></linearGradient>
<linearGradient id="t23_or" x1="0" y1="0" x2="0" y2="1"><stop offset="0" stop-color="#f8d828"/><stop offset="0.55" stop-color="#f89018"/><stop offset="0.85" stop-color="#e84820"/><stop offset="1" stop-color="#f8e868"/></linearGradient>
<filter id="t23_b"><feGaussianBlur stdDeviation="0.350"/></filter>
</defs>
<rect width="173" height="105" fill="#6cc4f8"/>
<g filter="url(#t23_b)">
<g fill="#fff" stroke="#e8ecd8" stroke-width="0.400"><rect x="6.800" y="12.700" width="47.200" height="8.200" rx="4.100"/><rect x="58.700" y="12.700" width="39.100" height="8.200" rx="4.100"/><rect x="102.500" y="12.700" width="31.500" height="8.200" rx="4.100"/><rect x="138.700" y="12.700" width="27.300" height="8.200" rx="4.100"/>
<rect x="48.800" y="26" width="47.200" height="9" rx="4.500"/><rect x="100.700" y="26" width="47.300" height="9" rx="4.500"/><rect x="152.700" y="26" width="13.300" height="9" rx="4.500"/></g>
<g fill="#58b828" stroke="#f0e050" stroke-width="0.400"><ellipse cx="48.500" cy="16.800" rx="4.500" ry="3"/><ellipse cx="92" cy="16.800" rx="4.500" ry="3"/><ellipse cx="128.500" cy="16.800" rx="4.500" ry="3"/><ellipse cx="160.500" cy="16.800" rx="4.500" ry="3"/></g>
<g fill="#286818"><rect x="47" y="16.300" width="3" height="1"/><rect x="48" y="15.300" width="1" height="3"/><rect x="90.500" y="16.300" width="3" height="1"/><rect x="91.500" y="15.300" width="1" height="3"/><rect x="127" y="16.300" width="3" height="1"/><rect x="128" y="15.300" width="1" height="3"/><rect x="159" y="16.300" width="3" height="1"/><rect x="160" y="15.300" width="1" height="3"/></g>
<g fill="#f03838"><path d="M9 15.500 q1.300 -1.800 2.600 0 q1.300 -1.800 2.600 0 q0 1.800 -2.600 3.600 q-2.600 -1.800 -2.600 -3.600 z"/><path d="M15.800 15.500 q1.300 -1.800 2.600 0 q1.300 -1.800 2.600 0 q0 1.800 -2.600 3.600 q-2.600 -1.800 -2.600 -3.600 z"/><path d="M22.600 15.500 q1.300 -1.800 2.600 0 q1.300 -1.800 2.600 0 q0 1.800 -2.600 3.600 q-2.600 -1.800 -2.600 -3.600 z"/></g>
<g fill="#b8b8b8"><path d="M29.400 15.500 q1.300 -1.800 2.600 0 q1.300 -1.800 2.600 0 q0 1.800 -2.600 3.600 q-2.600 -1.800 -2.600 -3.600 z"/><path d="M36.200 15.500 q1.300 -1.800 2.600 0 q1.300 -1.800 2.600 0 q0 1.800 -2.600 3.600 q-2.600 -1.800 -2.600 -3.600 z"/></g>
<path d="M63.500 13.800 l-2.200 3.500 h1.800 l-1 3 l3 -4 h-1.800 l1.200 -2.500 z" fill="#2888f0"/>
<rect x="66.500" y="15.200" width="18.500" height="3.400" rx="1.700" fill="#fcd878"/><rect x="66.500" y="15.200" width="11" height="3.400" rx="1.700" fill="#2c98f0"/>
<circle cx="107" cy="16.800" r="2.600" fill="#f8b828"/><circle cx="107" cy="16.800" r="1.300" fill="#fff0a0"/><rect x="113" y="16.200" width="7" height="1.200" fill="#c03818"/>
<path d="M139.800 15.300 q1.700 -2.300 3.400 0 q1.700 -2.300 3.400 0 q0 2.300 -3.400 4.600 q-3.400 -2.300 -3.400 -4.600 z" fill="#e82838"/><rect x="142.300" y="16" width="1.800" height="0.800" fill="#fff"/><rect x="142.800" y="15.500" width="0.800" height="1.800" fill="#fff"/><rect x="148.500" y="16.500" width="4.500" height="1" fill="#c03838"/>
<!-- left buttons -->
<rect x="6.800" y="26" width="37.200" height="13" rx="4.500" fill="#fff"/><rect x="6.800" y="26.800" width="37.200" height="11" rx="4" fill="url(#t23_gr)"/>
<rect x="6.800" y="43.600" width="37.200" height="12.600" rx="4.500" fill="#fff"/><rect x="6.800" y="44.400" width="37.200" height="10.800" rx="4" fill="url(#t23_bl)"/>
<rect x="6.800" y="61" width="37.200" height="13" rx="4.500" fill="#fff"/><rect x="6.800" y="61.800" width="37.200" height="11" rx="4" fill="url(#t23_pu)"/>
<rect x="6.800" y="78.600" width="37.200" height="12.600" rx="4.500" fill="#fff"/><rect x="6.800" y="79.400" width="37.200" height="10.800" rx="4" fill="url(#t23_or)"/>
<g font-family="Liberation Sans, sans-serif" font-weight="bold" font-size="4.400" text-anchor="middle">
<text x="25.400" y="33.600" fill="#1c5c10">Lorem ipsum</text><text x="25.400" y="51" fill="#104c98">Lorem ipsum</text><text x="25.400" y="68.600" fill="#48288c">Lorem ipsum</text><text x="25.400" y="86.200" fill="#b01818">Lorem ipsum</text>
</g>
<!-- progress -->
<rect x="51" y="28.800" width="35" height="3.400" rx="1.700" fill="#fcd878"/><rect x="51" y="28.800" width="25" height="3.400" rx="1.700" fill="#2ca0f0"/><rect x="89" y="29.800" width="4" height="1.200" fill="#c03818"/>
<rect x="103" y="28.800" width="35" height="3.400" rx="1.700" fill="#fcd878"/><rect x="103" y="28.800" width="24" height="3.400" rx="1.700" fill="#d080f0"/><rect x="141" y="29.800" width="4" height="1.200" fill="#c03818"/>
<rect x="155" y="29.300" width="2.500" height="2.500" fill="#b070e8"/><ellipse cx="161.500" cy="30.500" rx="2" ry="1.500" fill="#58b828"/>
<!-- settings -->
<rect x="48.200" y="44" width="47.300" height="47" rx="4" fill="#d8f8fc" stroke="#a8e0ec" stroke-width="0.600"/>
<path d="M45.900 41 l3 3.500 l-3 3.500 h6 v-7 z M97.800 41 l-3 3.500 l3 3.500 h-6 v-7 z" fill="#5840c0"/>
<path d="M48.500 38 H95.200 V45.500 Q72 43.500 48.500 45.500 Z" fill="#7058e8"/>
<text x="71.800" y="43.200" font-family="Liberation Sans, sans-serif" font-weight="bold" font-size="4" fill="#fff" text-anchor="middle">Settings</text>
<rect x="55" y="51.500" width="6" height="1.200" fill="#285888"/><rect x="55" y="61" width="7" height="1.200" fill="#285888"/><rect x="60" y="72" width="16" height="1.300" fill="#285888"/>
<rect x="68.500" y="49.500" width="19" height="5.500" rx="2.700" fill="#38a8f0" stroke="#fff" stroke-width="0.500"/><circle cx="85" cy="52.200" r="2.300" fill="#fce8a0"/>
<rect x="68.500" y="59" width="19" height="5.500" rx="2.700" fill="#fcd878" stroke="#fff" stroke-width="0.500"/><circle cx="71.500" cy="61.700" r="2.300" fill="#2c98f0"/><rect x="77" y="61.200" width="4" height="1" fill="#886"/>
<path d="M80 72 l1.500 2 l3 -4" stroke="#a8c818" stroke-width="1.300" fill="none"/>
<ellipse cx="61.500" cy="82.500" rx="5.500" ry="3.800" fill="#58b828" stroke="#f8e868" stroke-width="0.500"/><path d="M59.500 82.500 l1.500 1.500 l2.800 -3" stroke="#206010" stroke-width="1" fill="none"/>
<ellipse cx="82" cy="82.500" rx="5.500" ry="3.800" fill="#f89018" stroke="#f8e868" stroke-width="0.500"/><path d="M80.500 81 l3 3 m0 -3 l-3 3" stroke="#c02818" stroke-width="1" fill="none"/>
<!-- shop -->
<rect x="100.700" y="44" width="47.300" height="47.500" rx="4" fill="#fff" stroke="#fcd070" stroke-width="0.800"/>
<path d="M99 41 l3 3.500 l-3 3.500 h6 v-7 z M149.800 41 l-3 3.500 l3 3.500 h-6 v-7 z" fill="#e07818"/>
<path d="M101.500 38 H147.300 V45.500 Q124 43.500 101.500 45.500 Z" fill="#f8a828"/>
<text x="124.400" y="43.200" font-family="Liberation Sans, sans-serif" font-weight="bold" font-size="4" fill="#fff" text-anchor="middle">Shop</text>
<g><rect x="104" y="49.800" width="41" height="10.800" rx="3.500" fill="#fcd878"/><path d="M107.500 49.800 H115.300 V60.600 H107.500 Q104 60.600 104 57 V53.300 Q104 49.800 107.500 49.800 Z" fill="#f0a0e8"/>
<rect x="104" y="63" width="41" height="10.800" rx="3.500" fill="#fcd878"/><path d="M107.500 63 H115.300 V73.800 H107.500 Q104 73.800 104 70.300 V66.500 Q104 63 107.500 63 Z" fill="#58b8f0"/>
<rect x="104" y="76.300" width="41" height="10.800" rx="3.500" fill="#fcd878"/><path d="M107.500 76.300 H115.300 V87.100 H107.500 Q104 87.100 104 83.600 V79.800 Q104 76.300 107.500 76.300 Z" fill="#a878e8"/></g>
<path d="M110.500 51 l-2.500 4 h2 l-1.200 3.800 l3.700 -5 h-2 l1.500 -2.800 z" fill="#2888f0"/>
<path d="M106 67 q1.800 -2.600 3.700 0 q1.800 -2.600 3.700 0 q0 2.600 -3.700 5.200 q-3.700 -2.600 -3.700 -5.200 z" fill="#f03838"/>
<circle cx="109.700" cy="81.700" r="3" fill="none" stroke="#f8b828" stroke-width="1.400"/>
<g fill="#58b828" stroke="#f8e868" stroke-width="0.400"><rect x="127" y="52" width="16.500" height="6.400" rx="3.200"/><rect x="127" y="65.200" width="16.500" height="6.400" rx="3.200"/><rect x="127" y="78.500" width="16.500" height="6.400" rx="3.200"/></g>
<g fill="#206010"><rect x="130" y="54.700" width="10" height="1.100"/><rect x="130" y="67.900" width="10" height="1.100"/><rect x="130" y="81.200" width="10" height="1.100"/></g>
<g fill="#b03818"><rect x="118" y="54.700" width="5" height="1.100"/><rect x="119" y="67.900" width="2.500" height="1.100"/><rect x="117" y="81.200" width="7" height="1.100"/></g>
<!-- right buttons -->
<rect x="153.200" y="40" width="12.300" height="9" rx="4" fill="url(#t23_bl)" stroke="#fff" stroke-width="0.700"/>
<rect x="153.200" y="54.700" width="12.300" height="8.400" rx="4" fill="url(#t23_gr)" stroke="#fff" stroke-width="0.700"/>
<rect x="153.200" y="68.700" width="12.300" height="8.400" rx="4" fill="url(#t23_or)" stroke="#fff" stroke-width="0.700"/>
<rect x="153.200" y="82.700" width="12.300" height="8.400" rx="4" fill="url(#t23_pu)" stroke="#fff" stroke-width="0.700"/>
<path d="M159.300 42 l2 2.300 l-2 2.300 l-2 -2.300 z" fill="none" stroke="#1c50b0" stroke-width="0.800"/><path d="M157 58.500 h4.600 m-2.300 -2.300 v4.600" stroke="#206010" stroke-width="1.200"/><path d="M157 73.500 l2.300 -2.500 l2.300 2.500 v2 h-4.600 z" fill="#b01818"/><path d="M161 85 l-3 1.800 l3 1.800" stroke="#5830a8" stroke-width="0.900" fill="none"/>
</g>
</svg>
<div class="lbl">Casual UI (updated)</div></div>
<div class="item" style="left:1020px;top:498px"><svg preserveAspectRatio="none" viewBox="0 0 173 105">
<defs>
<radialGradient id="t24_bg" cx="0.3" cy="0.78" r="1.000"><stop offset="0" stop-color="#68d0f8"/><stop offset="0.22" stop-color="#38b0f0"/><stop offset="0.45" stop-color="#1c84dc"/><stop offset="0.7" stop-color="#1858b8"/><stop offset="1" stop-color="#123c8c"/></radialGradient>
<radialGradient id="t24_glow" cx="0.5" cy="0.5" r="0.5"><stop offset="0" stop-color="#c8f0ff" stop-opacity="0.7"/><stop offset="0.55" stop-color="#78d0f8" stop-opacity="0.45"/><stop offset="1" stop-color="#58c0f0" stop-opacity="0"/></radialGradient>
<linearGradient id="t24_p1" x1="0" y1="1" x2="1" y2="0"><stop offset="0" stop-color="#f8b838"/><stop offset="1" stop-color="#fcf4c8"/></linearGradient>
<linearGradient id="t24_p2" x1="0" y1="0" x2="1" y2="1"><stop offset="0" stop-color="#fcf8d0"/><stop offset="1" stop-color="#b8d060"/></linearGradient>
<linearGradient id="t24_p3" x1="0" y1="0" x2="1" y2="1"><stop offset="0" stop-color="#a8e0f8"/><stop offset="1" stop-color="#e8f8fc"/></linearGradient>
<linearGradient id="t24_p4" x1="0" y1="0" x2="1" y2="1"><stop offset="0" stop-color="#fcf4b8"/><stop offset="1" stop-color="#f8dc38"/></linearGradient>
</defs>
<rect width="173" height="105" fill="url(#t24_bg)"/>
<path d="M80 105 C110 85 140 70 173 58 V105 Z" fill="#1c70d0" fill-opacity="0.4"/>
<ellipse cx="44" cy="62" rx="30" ry="52" transform="rotate(38 44 62)" fill="url(#t24_glow)"/>
<path d="M0 102 C20 92 40 78 58 46" stroke="#e0f4ff" stroke-width="0.500" fill="none" stroke-opacity="0.600"/>
<path d="M0 104 C30 90 80 92 100 93 C112 94 122 98 128 105" stroke="#fff" stroke-width="0.600" fill="none" stroke-opacity="0.800"/>
<path d="M14 100 L50 78" stroke="#e8e060" stroke-width="0.600" stroke-dasharray="1 2" stroke-opacity="0.800"/>
<rect x="69" y="37" width="17" height="14.500" fill="url(#t24_p1)"/><rect x="87.500" y="36" width="19" height="15.500" fill="url(#t24_p2)"/>
<rect x="69" y="53" width="17" height="14" fill="url(#t24_p3)"/><rect x="87.500" y="53" width="19" height="16" fill="url(#t24_p4)"/>
</svg>
<div class="lbl">windows 7 2024 edition</div></div>
<div class="item" style="left:8px;top:661px"><svg style="width:172px" preserveAspectRatio="none" viewBox="0 0 173 105">
<defs>
<radialGradient id="t25_bg" cx="0.42" cy="0.5" r="0.75"><stop offset="0" stop-color="#c4d8ec"/><stop offset="0.5" stop-color="#a8c4e0"/><stop offset="1" stop-color="#86a6d0"/></radialGradient>
<linearGradient id="t25_b1" x1="0" y1="0" x2="1" y2="1"><stop offset="0" stop-color="#3c94f8"/><stop offset="0.5" stop-color="#1c68e4"/><stop offset="1" stop-color="#0c40b4"/></linearGradient>
<linearGradient id="t25_b2" x1="0" y1="0" x2="1" y2="1"><stop offset="0" stop-color="#2c80f4"/><stop offset="1" stop-color="#0a3aa8"/></linearGradient>
<filter id="t25_bl"><feGaussianBlur stdDeviation="0.600"/></filter>
</defs>
<rect width="173" height="105" fill="url(#t25_bg)"/>
<g filter="url(#t25_bl)">
<path d="M66 50 C62 36 72 22 88 14 C100 8 114 10 120 20 C128 32 128 48 118 58 C110 66 90 66 80 62 Z" fill="url(#t25_b1)"/>
<path d="M80 30 C90 18 108 16 116 24 C122 32 120 46 112 54 C116 40 108 28 96 28 C90 28 84 30 80 34 Z" fill="#0e48c4"/>
<path d="M88 24 C98 18 110 20 114 28 C118 36 116 44 112 50 C112 38 106 30 96 30 Z" fill="#2c80f4"/>
<path d="M70 34 C56 34 40 42 34 52 C28 62 30 72 38 76 C32 84 26 92 28 101.500 H70 Z" fill="url(#t25_b1)"/>
<path d="M34 52 C44 48 56 50 64 56 C52 56 42 62 38 76 C30 70 30 60 34 52 Z" fill="#0e50d0"/>
<path d="M38 76 C48 68 60 68 68 74 L66 101.500 H40 C34 94 34 84 38 76 Z" fill="#3088f4"/>
<path d="M26 88 C34 78 48 74 60 80 L64 101.500 H28 C25 98 24 92 26 88 Z" fill="#1c60dc"/>
<path d="M112 58 C122 52 138 54 146 66 C152 78 148 92 140 101.500 H108 Z" fill="url(#t25_b2)"/>
<path d="M114 70 C124 64 138 68 142 80 C144 90 140 98 136 101.500 H124 C130 92 128 78 114 70 Z" fill="#2470e8"/>
<path d="M114 84 C122 82 128 88 128 101.500 H112 Z" fill="#0c389c"/>
</g>
<rect x="57.200" y="36.200" width="57.500" height="65.300" rx="1.200" fill="#e6eef8" fill-opacity="0.960"/>
<rect x="60" y="38.800" width="52" height="3.200" rx="1.600" fill="#f8fafc"/>
<rect x="63" y="46" width="4" height="0.900" fill="#666"/><rect x="103" y="45.500" width="5" height="1.800" fill="#f4f6f8"/>
<g>
<circle cx="64.500" cy="51.300" r="1.800" fill="#2c98e0"/><circle cx="73" cy="51.300" r="1.800" fill="#3868b8"/><circle cx="81.500" cy="51.300" r="1.800" fill="#e04838"/><rect x="88.500" y="49.500" width="3.600" height="3.600" fill="#a848e0"/><circle cx="98.800" cy="51.300" r="1.800" fill="#58b0e8"/><path d="M105.500 51.500 l1.300 1.300 l2.400 -2.800" stroke="#3880e0" stroke-width="0.900" fill="none"/>
<rect x="62.700" y="57" width="3.600" height="3.200" fill="#486890"/><rect x="71.200" y="57" width="3.600" height="3.600" fill="#2868c8"/><rect x="80.500" y="56.500" width="2" height="4" fill="#2890e0"/><circle cx="90.300" cy="58.800" r="1.800" fill="#e87838"/><circle cx="98.800" cy="58.800" r="1.800" fill="#f08888"/><rect x="105" y="57" width="3.600" height="3.600" fill="#2898e8"/>
<rect x="62.700" y="64.500" width="3.600" height="3.600" fill="#207838"/><circle cx="73" cy="66.300" r="1.800" fill="#382828"/><circle cx="81.500" cy="66.300" r="1.800" fill="#78c848"/><circle cx="90.300" cy="66.300" r="1.800" fill="#18a048"/><circle cx="98.800" cy="66.300" r="1.800" fill="#701818"/><path d="M105 65 h3.600 l-1.800 3 z" fill="#88b8d8"/>
</g>
<rect x="63" y="74.500" width="9" height="1" fill="#777"/><rect x="104" y="74" width="5" height="1.800" fill="#f4f6f8"/>
<g><circle cx="64.500" cy="79.500" r="1.400" fill="#283868"/><circle cx="64.500" cy="84.500" r="1.300" fill="#e05838"/><circle cx="64.500" cy="89.500" r="1.300" fill="#e85848"/><circle cx="90.300" cy="79.500" r="1.400" fill="#507868"/><circle cx="90.300" cy="84.500" r="1.300" fill="#6088b8"/><circle cx="90.300" cy="89.500" r="1.300" fill="#e03838"/></g>
<g fill="#889"><rect x="67.500" y="79" width="8" height="0.900"/><rect x="67.500" y="84" width="9" height="0.900"/><rect x="67.500" y="89" width="9" height="0.900"/><rect x="93.500" y="79" width="10" height="0.900"/><rect x="93.500" y="84" width="9" height="0.900"/><rect x="93.500" y="89" width="9" height="0.900"/></g>
<circle cx="64.500" cy="97.500" r="1.500" fill="#584838"/><rect x="68" y="97.200" width="5" height="0.800" fill="#999"/><circle cx="107.500" cy="97.500" r="0.700" fill="#888"/>
<rect x="0" y="101.500" width="173" height="3.500" fill="#e2eaf4"/>
<g><rect x="71" y="102.300" width="2" height="2" fill="#2870d8"/><rect x="75" y="102.300" width="2" height="2" fill="#555"/><rect x="79" y="102.300" width="2" height="2" fill="#334"/><rect x="83" y="102.300" width="2" height="2" fill="#3898e8"/><rect x="87" y="102.300" width="2" height="2" fill="#5878d8"/><rect x="91" y="102.300" width="2" height="2" fill="#e8c838"/><rect x="95" y="102.300" width="2" height="2" fill="#2890d8"/><rect x="99" y="102.300" width="2" height="2" fill="#285890"/></g>
<rect x="159" y="102.500" width="12" height="1.500" fill="#8898b0"/>
</svg>
<div class="lbl">Win11 Simu</div></div>
<div class="item" style="left:210px;top:661px"><svg preserveAspectRatio="none" viewBox="0 0 173 105">
<defs>
<linearGradient id="t26_sky" x1="0" y1="0" x2="1" y2="1"><stop offset="0" stop-color="#6c7ca8"/><stop offset="0.4" stop-color="#98a4b8"/><stop offset="1" stop-color="#a8a8b0"/></linearGradient>
<linearGradient id="t26_wat" x1="0" y1="0" x2="0" y2="1"><stop offset="0" stop-color="#b0acc0"/><stop offset="0.5" stop-color="#a4a4bc"/><stop offset="1" stop-color="#8c8ca8"/></linearGradient>
<linearGradient id="t26_or" x1="0" y1="0" x2="1" y2="1"><stop offset="0" stop-color="#b85010"/><stop offset="0.4" stop-color="#e07c1c"/><stop offset="1" stop-color="#cc6414"/></linearGradient>
<linearGradient id="t26_or2" x1="0" y1="0" x2="1" y2="1"><stop offset="0" stop-color="#f8b050"/><stop offset="0.5" stop-color="#f09838"/><stop offset="1" stop-color="#d87820"/></linearGradient>
<pattern id="t26_nz" width="7" height="6" patternUnits="userSpaceOnUse"><rect width="7" height="6" fill="#5c5c5c"/><rect x="0" y="0" width="2" height="2" fill="#747474"/><rect x="3" y="2" width="2" height="2" fill="#444"/><rect x="5" y="4" width="2" height="2" fill="#888"/><rect x="1" y="4" width="1.500" height="1.500" fill="#3a3a3a"/><rect x="4.500" y="0" width="1.500" height="1.500" fill="#686868"/></pattern>
<filter id="t26_bl"><feGaussianBlur stdDeviation="0.500"/></filter>
<filter id="t26_rock" x="0" y="0" width="1" height="1"><feTurbulence type="fractalNoise" baseFrequency="0.45" numOctaves="3" seed="7" result="n"/><feColorMatrix in="n" type="matrix" values="0.55 0.55 0.55 0 -0.66  0.55 0.55 0.55 0 -0.66  0.55 0.55 0.55 0 -0.66  0 0 0 0 1" result="g"/><feComposite in="g" in2="SourceGraphic" operator="in"/></filter>
</defs>
<rect width="173" height="105" fill="url(#t26_sky)"/>
<g filter="url(#t26_bl)">
<rect x="48" y="44" width="125" height="61" fill="url(#t26_wat)"/>
<ellipse cx="66" cy="66" rx="18" ry="9" fill="#c4bcc4" fill-opacity="0.8"/>
<path d="M49.400 42 L56.400 33.800 L65.700 25.700 L75 18.700 L84.400 12.800 L96 9.300 L107.700 10.500 L119.400 11.700 L128.700 9.300 L140.400 12.300 L148.600 10.500 L160.300 8.200 L173 7 V75 L142.700 67.700 L107.700 61.900 L68 58.400 L49.400 45.500 Z" fill="#5e5e5e" filter="url(#t26_rock)"/>
<path d="M49.400 42 L56.400 33.800 L65.700 25.700 L75 18.700 L84.400 12.800 L96 9.300 L107.700 10.500 L119.400 11.700 L128.700 9.300 L140.400 12.300 L134 19 L127 25 L120 23 L112 26 L104 21 L96 24 L88 23 L80 27 L72 32 L64 38 L56 43 L50 45.500 Z" fill="url(#t26_or)"/>
<path d="M92 11 L108 12 L118 14 L112 22 L100 20 Z" fill="#f4a840"/><path d="M104 13 l8 1 l-2 5 l-6 1 z" fill="#d0c050" fill-opacity="0.600"/>
<path d="M56 40 L66 30 L76 22 L72 30 L62 38 Z" fill="#a04810" fill-opacity="0.700"/>
<path d="M104 22 l2 -4 l2 4 l2 -5 l2 6 l3 -4 l2 5 l3 -3 l1 4 l-7 3 l-8 -2 z" fill="#181818"/>
<path d="M49.400 47 L60 52 L68 58.400 L80 68 L92 76 L104 79 L125 77 L143 75.500 L135 68 L125 64 L112 66.500 L100 62.500 L88 62 L76 56 L64 50 Z" fill="url(#t26_or2)"/>
<path d="M68 58.400 L100 59 L125 63 L135 68 L120 65 L108 66 L98 63 L86 63 L76 60 Z" fill="#484848"/>
<path d="M104 66 l2 4 l2 -4 l2 5 l2 -5 l3 4 l2 -4 l-3 -2 l-8 -1 z" fill="#202020"/>
<path d="M109 101 L118 88 L130 80 L143 76 L173 75 V101 Z" fill="#1a1a1c"/>
<path d="M120 88 L143 79 L173 78 V83 L140 86 Z" fill="#343434"/>
<ellipse cx="54" cy="73" rx="6" ry="2" fill="#3c3c40"/><ellipse cx="62" cy="86" rx="17" ry="6.500" fill="#2a2a2e"/><ellipse cx="62" cy="84" rx="14" ry="4" fill="#48484e"/>
<path d="M48 58 L58 62 L52 68 L48 66 Z" fill="#303030"/>
</g>
<!-- right gadgets -->
<rect x="162" y="40.800" width="11" height="23" fill="#182838"/><rect x="164" y="52" width="8" height="1.200" fill="#c8a048"/>
<circle cx="169" cy="30.500" r="6" fill="#f4f4f0"/><path d="M169 30.500 l2 -3 M169 30.500 l-2 2" stroke="#c03020" stroke-width="0.500"/>
<g><rect x="163" y="8" width="2" height="2" fill="#48a048"/><rect x="167" y="10" width="2" height="2" fill="#68b858"/><rect x="165" y="14" width="2" height="2" fill="#38883c"/><rect x="170" y="8" width="2" height="2" fill="#d04030"/><rect x="169" y="15" width="2" height="2" fill="#48a048"/><rect x="168" y="2" width="5" height="2" fill="#3868c0"/></g>
<circle cx="168" cy="72" r="4" fill="#181c30"/><rect x="166" y="70" width="2" height="2" fill="#3050c0"/><rect x="169" y="73" width="2" height="2" fill="#c02020"/>
<!-- start menu -->
<rect x="28.400" y="32" width="20.400" height="69" fill="#2e3236"/>
<rect x="28.400" y="38" width="20.400" height="12" fill="#50545a" fill-opacity="0.600"/><rect x="28.400" y="74" width="20.400" height="6" fill="#484c52" fill-opacity="0.700"/>
<rect x="0" y="32.700" width="28.400" height="64" fill="#fefefe"/>
<rect x="34.800" y="28.600" width="7.600" height="7" fill="#0c0c0c" stroke="#444" stroke-width="0.400"/><rect x="36.500" y="30" width="4" height="2.500" fill="#e8e8e8"/>
<g fill="#d8d8dc"><rect x="31" y="39" width="2" height="2"/><rect x="31" y="44" width="8" height="1"/><rect x="31" y="49" width="5" height="1"/><rect x="31" y="54" width="3" height="1"/><rect x="31" y="59" width="4" height="1.200"/><rect x="31" y="64" width="9" height="1"/><rect x="31" y="69" width="7" height="1"/><rect x="31" y="73" width="2" height="1.200"/><rect x="31" y="78" width="8" height="1" fill-opacity="0.500"/><rect x="31" y="83" width="9" height="1" fill-opacity="0.500"/><rect x="31" y="88" width="12" height="1.100"/><rect x="31" y="93" width="12" height="1.100"/></g>
<g fill="#4878c8"><rect x="0" y="34" width="5" height="0.900" fill="#aab"/><rect x="0" y="36" width="12" height="0.900" fill="#667"/><rect x="0" y="39" width="3" height="0.900" fill="#aab"/><rect x="0" y="46.500" width="12" height="1.200" fill="#345"/><rect x="0" y="51.500" width="18" height="1.200"/><rect x="0" y="56.500" width="16" height="1.200"/><rect x="0" y="61.500" width="17" height="1.200"/><rect x="0" y="66.500" width="15" height="1.100" fill="#88a8e0"/><rect x="0" y="72.500" width="17" height="1.200" fill="#345"/><rect x="0" y="77.500" width="5" height="1.200" fill="#345"/><rect x="0" y="83" width="3" height="0.900" fill="#bbc"/></g>
<rect x="0" y="92.500" width="3" height="1.200" fill="#555"/><rect x="5" y="93.500" width="4" height="0.900" fill="#999"/>
<rect x="0" y="96.300" width="28.400" height="4.200" fill="#fafafa" stroke="#99a8c0" stroke-width="0.400"/><rect x="0" y="98" width="2" height="0.900" fill="#e8a838"/>
<rect x="30" y="96.800" width="6" height="3" fill="#c06030"/><rect x="30" y="96.800" width="6" height="1" fill="#888060"/><rect x="37.500" y="97" width="8" height="1" fill="#d8d8dc"/>
<!-- taskbar -->
<rect x="0" y="101" width="173" height="4" fill="#262a32"/><rect x="40" y="101" width="70" height="1.200" fill="#6c7078" fill-opacity="0.700"/>
<circle cx="2.500" cy="103" r="1.600" fill="#3868c8"/><rect x="6" y="102" width="2" height="2" fill="#5878b8"/><rect x="9" y="102" width="2" height="2" fill="#c8d0e0"/>
<g><rect x="151" y="102" width="2" height="2" fill="#3868c8"/><rect x="155" y="102" width="2" height="2" fill="#3868c8"/><rect x="158.500" y="102" width="2" height="2" fill="#e8c838"/><rect x="161.500" y="102" width="1.500" height="2" fill="#d04030"/><rect x="165" y="102" width="1.500" height="2" fill="#ccd"/><rect x="168" y="102" width="2" height="2" fill="#48a048"/><rect x="171" y="102" width="1.500" height="2" fill="#ccd"/></g>
</svg>
<div class="lbl">Project '05 (Windows V...</div></div>
<div class="item" style="left:413px;top:661px"><svg style="width:172px" preserveAspectRatio="none" viewBox="0 0 173 105">
<defs><linearGradient id="t27_bg" x1="0" y1="0" x2="1" y2="0"><stop offset="0" stop-color="#f6ae22"/><stop offset="0.6" stop-color="#f8b628"/><stop offset="1" stop-color="#f8bc3c"/></linearGradient></defs>
<rect width="173" height="105" fill="url(#t27_bg)"/>
<path d="M0 0 H37 L21 39 L0 30 Z" fill="#f2a420"/>
<path d="M130 0 H173 V105 H150 L140 60 Z" fill="#f8bc38" fill-opacity="0.500"/>
<path d="M0 30 L21 39 L0 65 Z" fill="#d86a18"/>
<path d="M0 65 L16 46 L10 80 L0 95 Z" fill="#f4a848"/>
<path d="M0 72 L90 70 L46 105 H0 Z" fill="#f6ac24"/>
<path d="M90 70 L46 105 H82 Z" fill="#f08a28"/>
<path d="M90 70 L82 105 H76 Z" fill="#d86820"/>
<path d="M90 70 L85 105 H97 Z" fill="#a88048"/>
<path d="M90 70 L173 103 V105 H97 Z" fill="#f0dcc8"/>
<path d="M90 70 L173 103 V100 Z" fill="#e89820"/>
</svg>
<div class="lbl">Windows 8</div></div>
<div class="item" style="left:615px;top:661px"><svg preserveAspectRatio="none" viewBox="0 0 173 105">
<defs>
<linearGradient id="t28_dk" x1="0" y1="0" x2="0" y2="1"><stop offset="0" stop-color="#4868b8"/><stop offset="0.4" stop-color="#2c4cac"/><stop offset="0.75" stop-color="#1c3494"/><stop offset="1" stop-color="#2848a8"/></linearGradient>
<linearGradient id="t28_str" x1="0" y1="0" x2="0" y2="1"><stop offset="0" stop-color="#88a8d8" stop-opacity="0.650"/><stop offset="1" stop-color="#88a8d8" stop-opacity="0"/></linearGradient>
<radialGradient id="t28_clk" cx="0.5" cy="0.5" r="0.5"><stop offset="0" stop-color="#f0f4fc"/><stop offset="0.72" stop-color="#c8d8f0"/><stop offset="0.78" stop-color="#8898b8"/><stop offset="0.9" stop-color="#d0d8e8"/><stop offset="1" stop-color="#7888a8"/></radialGradient>
<filter id="t28_bl"><feGaussianBlur stdDeviation="0.800"/></filter>
</defs>
<rect width="173" height="105" fill="url(#t28_dk)"/>
<g filter="url(#t28_bl)"><rect x="90" y="0" width="5" height="50" fill="url(#t28_str)"/><rect x="98" y="0" width="7" height="60" fill="url(#t28_str)"/><rect x="108" y="0" width="4" height="42" fill="url(#t28_str)"/><rect x="116" y="0" width="8" height="56" fill="url(#t28_str)"/><rect x="128" y="0" width="5" height="48" fill="url(#t28_str)"/><rect x="135" y="0" width="5" height="36" fill="url(#t28_str)"/>
<path d="M82 86 C100 82 120 84 141 88 V92 C120 88 100 88 82 90 Z" fill="#4868c0" fill-opacity="0.500"/></g>
<!-- start menu -->
<rect x="0" y="0" width="82" height="105" fill="#4c82cc"/><rect x="0" y="8" width="41.500" height="97" fill="#5088d4"/>
<rect x="41.300" y="9" width="0.500" height="94" fill="#78a4e0"/><rect x="82" y="0" width="0.700" height="105" fill="#182848"/>
<rect x="2" y="0" width="10.600" height="7.800" fill="#f8f8f8"/><ellipse cx="7" cy="4.500" rx="3.800" ry="2.800" fill="#f0a020"/><circle cx="6" cy="1.500" r="1.800" fill="#f0a020"/><rect x="5.500" y="0" width="1.500" height="0.800" fill="#e03818"/>
<rect x="15" y="1" width="28" height="1.200" fill="#e4ecf8"/><rect x="22" y="3" width="20" height="1" fill="#c8d8f0"/>
<g>
<circle cx="5.500" cy="15" r="2.800" fill="#3898e8"/><circle cx="5.500" cy="23.500" r="2.800" fill="#e4e8f0"/><circle cx="5.500" cy="33" r="2.800" fill="#e84828"/><path d="M3 33 a2.800 2.800 0 0 0 5.500 0 z" fill="#38a048"/><path d="M3.500 51 l2 -5 l3 1 l-1 5 z" fill="#e86820"/><rect x="3" y="48.500" width="2.500" height="2.500" fill="#3870d0"/>
<circle cx="5.500" cy="50" r="0" /><circle cx="5.500" cy="57" r="0"/>
<circle cx="5.500" cy="50.500" r="0"/>
<circle cx="5.500" cy="50" r="0"/>
<circle cx="5.500" cy="50" r="0"/>
<circle cx="5.500" cy="50.200" r="2.900" fill="#f8f8f8"/><circle cx="5.500" cy="50.200" r="1.500" fill="#283848"/><path d="M3 49 a2.800 2.800 0 0 1 5.500 0" fill="none" stroke="#e83828" stroke-width="0.900"/>
<path d="M3 60 l2.500 -3 l2.500 3 l-2.500 2 z" fill="#48a848"/><rect x="3" y="59" width="2.500" height="2.500" fill="#3868d0"/>
<circle cx="5.500" cy="67.500" r="2.800" fill="#d8c8a8"/><path d="M3 68 a2.800 2.800 0 0 0 5.500 0 z" fill="#58a848"/>
<circle cx="5" cy="75.500" r="2.500" fill="#888"/><rect x="5" y="76" width="3" height="2.500" fill="#e03818"/>
</g>
<g fill="#f4f8fc"><rect x="10" y="13.300" width="9" height="1.300"/><rect x="10" y="21.300" width="7" height="1.300"/><rect x="10" y="31" width="25" height="1.500"/><rect x="10" y="41" width="12" height="1.200"/><rect x="10" y="49.800" width="22" height="1.100" fill-opacity="0.700"/><rect x="10" y="58.200" width="21" height="1.400"/><rect x="10" y="67" width="17" height="1.100" fill-opacity="0.700"/><rect x="10" y="75.800" width="21" height="1.100" fill-opacity="0.700"/><rect x="10" y="98.500" width="15" height="1.200" fill-opacity="0.800"/></g>
<g fill="#c8d8f0" fill-opacity="0.800"><rect x="10" y="16" width="16" height="0.900"/><rect x="10" y="24.500" width="16" height="0.900"/><rect x="10" y="33.800" width="7" height="0.900"/><rect x="9" y="28" width="22" height="0.400"/></g>
<path d="M28 97 l2 2 l-2 2" stroke="#78c0f0" stroke-width="0.900" fill="none"/>
<g>
<rect x="43.500" y="12" width="4" height="4" fill="#e8d070"/><rect x="43.500" y="19" width="4" height="4" fill="#e4e4e8"/><rect x="43.500" y="26" width="4" height="4" fill="#e8c050"/><rect x="43.500" y="33" width="4" height="4" fill="#c86828"/><rect x="44" y="40" width="3.500" height="3.500" fill="#e8c838"/><circle cx="45.500" cy="48.500" r="2.200" fill="#e8c070"/><rect x="43.500" y="53.500" width="4" height="4" fill="#98b8e0"/><rect x="43.500" y="61" width="3.500" height="4" fill="#e0e4ec"/><rect x="43.500" y="68" width="4" height="4" fill="#d8d0b8"/><rect x="43.500" y="75" width="4.500" height="3.500" fill="#c8d0e0"/><circle cx="45.500" cy="84.500" r="2.300" fill="none" stroke="#f4f4f8" stroke-width="0.800"/><path d="M43.500 93 l3.500 -4" stroke="#e8e8f0" stroke-width="1"/><rect x="43.500" y="97.500" width="4" height="2.500" fill="#d8dce8"/>
</g>
<g fill="#f4f8fc"><rect x="49.500" y="13.500" width="17" height="1.300"/><rect x="49.500" y="20.500" width="30" height="1.300"/><rect x="49.500" y="27.500" width="27" height="1.300"/><rect x="49.500" y="34.500" width="14" height="1.500"/><rect x="49.500" y="41.300" width="15" height="1.400"/><rect x="49.500" y="48" width="15" height="1.100" fill-opacity="0.800"/><rect x="49.500" y="55" width="15" height="1.200"/><rect x="49.500" y="62.500" width="13" height="1.100" fill-opacity="0.800"/><rect x="49.500" y="69.800" width="16" height="1.100" fill-opacity="0.800"/><rect x="49.500" y="76.300" width="22" height="1.200"/><rect x="49.500" y="84" width="17" height="1.300"/><rect x="49.500" y="91" width="3" height="1.100"/><rect x="49.500" y="98.300" width="2" height="1.100"/></g>
<rect x="52" y="59" width="21" height="0.400" fill="#88b0e8"/>
<!-- desktop text, cursor, balloon -->
<rect x="83" y="76.500" width="34.500" height="1.700" fill="#e8f0fc" fill-opacity="0.900"/>
<path d="M84 51 v4.500 l1.200 -1 l0.800 1.800 l0.800 -0.400 l-0.800 -1.800 h1.500 z" fill="#fff" stroke="#223" stroke-width="0.300"/>
<rect x="92" y="95.500" width="46" height="9.500" rx="0.800" fill="#f8f8fc"/><rect x="95" y="97" width="3" height="4" fill="#e8b838"/><rect x="103" y="98.300" width="29" height="1.300" fill="#2858b8"/><rect x="96" y="103.500" width="38" height="0.800" fill="#888"/>
<!-- sidebar -->
<rect x="141" y="0" width="32" height="105" fill="#3c62b4"/><rect x="141" y="0" width="0.500" height="105" fill="#1c3484"/>
<rect x="142" y="0.500" width="24" height="3" fill="#dce4f4"/><rect x="143" y="1.300" width="10" height="1.400" fill="#223"/><rect x="166" y="0.500" width="7" height="3" fill="#98b0dc"/>
<rect x="141" y="6.500" width="32" height="20" fill="#4870c0"/><g fill="#e8f0fc"><rect x="142.500" y="9" width="14" height="1.200"/><rect x="147" y="13.300" width="24" height="1.200"/><rect x="147" y="18.500" width="15" height="1.200"/><rect x="142" y="24" width="10" height="1.200"/></g><rect x="142.500" y="12.500" width="2.500" height="2.500" fill="#2868d8"/><rect x="142.500" y="17.800" width="2.500" height="2.500" fill="#d8e0f0"/><rect x="170" y="8" width="2" height="2" fill="#e8a838"/>
<rect x="141" y="26.300" width="31" height="23.300" fill="#1c4c14"/>
<g filter="url(#t28_bl)"><circle cx="150" cy="33" r="2.500" fill="#f0a8d8"/><circle cx="158" cy="38" r="2.200" fill="#e890c8"/><circle cx="146" cy="43" r="2" fill="#f0b0d8"/><circle cx="164" cy="42" r="2.500" fill="#e898c8"/><circle cx="163" cy="32" r="2" fill="#f8c8e0"/><circle cx="169" cy="36" r="1.500" fill="#e8a0d0"/><circle cx="153" cy="45" r="1.500" fill="#f0a8d8"/><ellipse cx="156" cy="30" rx="8" ry="3" fill="#3c7c24" fill-opacity="0.700"/><ellipse cx="150" cy="38" rx="4" ry="2" fill="#2c6c1c" fill-opacity="0.800"/></g>
<rect x="141" y="50.500" width="32" height="27" fill="#4468b8"/>
<ellipse cx="156.700" cy="63.600" rx="13.500" ry="11.500" fill="url(#t28_clk)"/><path d="M156.700 63.600 l4 -5 M156.700 63.600 l-5 3" stroke="#445" stroke-width="0.800"/><path d="M161 58 l1 6" stroke="#e06878" stroke-width="0.400"/>
<rect x="142" y="79" width="21" height="1.300" fill="#e8f0fc"/><rect x="170.500" y="78.500" width="2" height="2" fill="#a8c0e8"/><rect x="142.500" y="82.500" width="2.500" height="2.500" fill="#e8a838"/><circle cx="150" cy="84" r="1.400" fill="#f4f4f8"/><circle cx="150.300" cy="84" r="0.600" fill="#c02020"/>
<rect x="141" y="88" width="32" height="17" fill="#3458b0"/><rect x="150" y="88" width="8" height="17" fill="#4064b8" fill-opacity="0.600"/><rect x="141" y="87.700" width="32" height="0.400" fill="#6c8cd0"/>
</svg>
<div class="lbl">Windows 7</div></div>
<div class="item" style="left:818px;top:661px"><svg style="width:172px" preserveAspectRatio="none" viewBox="0 0 173 105">
<defs>
<radialGradient id="t29_bg" cx="0.3" cy="0.85" r="0.95"><stop offset="0" stop-color="#58b8ec"/><stop offset="0.35" stop-color="#2c8ad8"/><stop offset="0.7" stop-color="#1c62c0"/><stop offset="1" stop-color="#164aa4"/></radialGradient>
<linearGradient id="t29_win" x1="0" y1="0" x2="1" y2="1"><stop offset="0" stop-color="#cfe0f0"/><stop offset="0.5" stop-color="#eef4fa"/><stop offset="1" stop-color="#cadcee"/></linearGradient>
</defs>
<rect width="173" height="105" fill="url(#t29_bg)"/>
<radialGradient id="t29_gl" cx="0.5" cy="0.5" r="0.5"><stop offset="0" stop-color="#8cdcfc" stop-opacity="0.85"/><stop offset="0.5" stop-color="#48b0ec" stop-opacity="0.5"/><stop offset="1" stop-color="#2c8ad8" stop-opacity="0"/></radialGradient>
<path d="M60 105 C90 80 120 70 173 60 V105 Z" fill="#1a58b4" fill-opacity="0.35"/>
<ellipse cx="74" cy="66" rx="50" ry="42" fill="url(#t29_gl)"/>
<path d="M0 100 C40 88 90 92 120 105" stroke="#a8dcf8" stroke-width="0.500" fill="none" stroke-opacity="0.600"/>
<!-- logo -->
<g transform="translate(0 3)">
<path d="M71 32 C77 28 84 28 89.500 31.500 L85.500 47.500 C80 44.500 74.500 44.500 68.500 48 Z" fill="#f0581c"/>
<path d="M73.500 33.500 C78 30.500 83 30.500 86.500 33 L84.500 41 C80.500 39 76.500 39 72 41.500 Z" fill="#f8b048"/>
<path d="M67.500 50.500 C73.500 46.500 80 47 85 50 L81 66.500 C76 63.500 69.500 63.500 63.500 67 Z" fill="#2c88e4"/>
<path d="M69.500 52 C74 49.500 79 50 82.500 52 L80.500 60.500 C76.500 58.500 72 58.500 67.500 61 Z" fill="#8cd0fc"/>
<path d="M86.500 52 C91.500 55 97.500 55 103 52 L99 68.500 C93.500 71.500 88 71.500 82.500 68.500 Z" fill="#f8d428"/>
<path d="M88.500 54 C92 56 96 56 100 54.500 L98.500 61 C95 63 91 63 87.500 61.500 Z" fill="#fcf0a0" fill-opacity="0.700"/>
<path d="M91.500 34 C95.500 36.500 100 36.500 104.500 34 L101 48.500 C97 50.500 92.500 50.500 88.500 48.500 Z" fill="#58b030"/>
</g>
<!-- calculator -->
<rect x="0" y="0" width="29" height="47" fill="#b8d0e8"/>
<rect x="0" y="2.500" width="27" height="42" fill="#dfe9f3"/>
<rect x="0" y="5" width="26" height="9" fill="#f6f9fc"/>
<g fill="#f4f7fa" stroke="#a8b8c8" stroke-width="0.300"><rect x="1" y="17" width="4.500" height="4"/><rect x="7" y="17" width="4.500" height="4"/><rect x="13" y="17" width="4.500" height="4"/><rect x="19" y="17" width="4.500" height="4"/><rect x="1" y="23" width="4.500" height="4"/><rect x="7" y="23" width="4.500" height="4"/><rect x="13" y="23" width="4.500" height="4"/><rect x="19" y="23" width="4.500" height="4"/><rect x="1" y="29" width="4.500" height="4"/><rect x="7" y="29" width="4.500" height="4"/><rect x="13" y="29" width="4.500" height="4"/><rect x="19" y="29" width="4.500" height="4"/><rect x="1" y="35" width="4.500" height="4"/><rect x="7" y="35" width="4.500" height="4"/><rect x="13" y="35" width="4.500" height="4"/><rect x="19" y="35" width="4.500" height="9"/><rect x="1" y="40.500" width="10.500" height="3.500"/><rect x="13" y="40.500" width="4.500" height="3.500"/></g>
<!-- start menu -->
<rect x="0" y="50" width="44" height="48" rx="1" fill="#4a739e"/>
<linearGradient id="t29_smr" x1="0" y1="0" x2="0" y2="1"><stop offset="0" stop-color="#7c9cbc"/><stop offset="0.45" stop-color="#4c6c90"/><stop offset="0.55" stop-color="#3a4c64"/><stop offset="0.65" stop-color="#4a7088"/><stop offset="1" stop-color="#3c5c80"/></linearGradient><rect x="23" y="50.500" width="21" height="47" fill="url(#t29_smr)"/>
<rect x="0" y="51" width="23" height="46" fill="#fdfdfe"/>
<rect x="29" y="47" width="9" height="9" fill="#c8a088" stroke="#dfe8f0" stroke-width="1"/>
<g fill="#444"><rect x="1" y="54" width="11" height="1"/><rect x="1" y="59" width="7" height="1"/><rect x="1" y="64" width="9" height="1"/><rect x="1" y="69" width="6" height="1"/><rect x="1" y="74" width="12" height="1.200"/><rect x="1" y="80" width="6" height="1"/><rect x="1" y="84" width="4" height="1"/></g>
<g fill="#c8d8ea"><rect x="25" y="59" width="9" height="1"/><rect x="25" y="63" width="7" height="1"/><rect x="25" y="68" width="6" height="1"/><rect x="25" y="72" width="8" height="1"/><rect x="25" y="77" width="10" height="1"/><rect x="25" y="81" width="12" height="1"/><rect x="25" y="86" width="11" height="1"/><rect x="25" y="93" width="10" height="1.500"/></g>
<rect x="0" y="90" width="22" height="5" fill="#fff" stroke="#9ab" stroke-width="0.400"/>
<!-- dialog -->
<rect x="92" y="12" width="73" height="53" rx="1" fill="#b4cce6" stroke="#6d8cb0" stroke-width="0.600"/>
<rect x="94" y="17.500" width="69" height="45.500" fill="url(#t29_win)"/>
<rect x="94" y="17.500" width="69" height="4.500" fill="#e9eff6"/>
<rect x="94" y="22.500" width="69" height="3" fill="#f7f9fc" stroke="#b8c4d2" stroke-width="0.300"/>
<rect x="95" y="13.500" width="22" height="2.500" fill="#5c6f88" fill-opacity="0.7"/>
<rect x="144" y="12.500" width="18" height="3" fill="#9db8d8"/>
<rect x="114" y="33" width="25" height="1" fill="#666"/><rect x="104" y="35.500" width="51" height="1" fill="#777"/>
<rect x="94" y="54" width="69" height="0.600" fill="#a8b8cc"/>
<circle cx="128.500" cy="60" r="2.800" fill="#2864c8" stroke="#d8e8f8" stroke-width="0.600"/>
<rect x="117" y="59.500" width="7" height="1" fill="#667"/><rect x="133" y="59.500" width="7" height="1" fill="#667"/>
<!-- taskbar -->
<linearGradient id="t29_tb" x1="0" y1="0" x2="1" y2="0"><stop offset="0" stop-color="#6ca8d4"/><stop offset="0.5" stop-color="#4c8cc4"/><stop offset="1" stop-color="#2c64ac"/></linearGradient><rect x="0" y="98" width="173" height="7" fill="url(#t29_tb)"/>
<rect x="0" y="98" width="173" height="0.700" fill="#86b4e0"/>
<circle cx="3.500" cy="101.500" r="2.800" fill="#9cc8ec"/><rect x="8" y="99.500" width="5" height="4.500" fill="#8fb2d6"/>
<rect x="157" y="100" width="14" height="3.500" fill="#a8c4e4"/>
</svg>
<div class="lbl">Windows vista</div></div>
<div class="item" style="left:1020px;top:661px"><svg preserveAspectRatio="none" viewBox="0 0 173 105">
<defs>
<linearGradient id="t30_f" x1="0" y1="0" x2="0" y2="1"><stop offset="0" stop-color="#38b050"/><stop offset="0.3" stop-color="#1c9058"/><stop offset="0.55" stop-color="#14607c"/><stop offset="0.75" stop-color="#20408c"/><stop offset="1" stop-color="#3a2080"/></linearGradient>
<linearGradient id="t30_st" x1="1" y1="0" x2="0" y2="1"><stop offset="0" stop-color="#182460" stop-opacity="0.5"/><stop offset="0.45" stop-color="#1c64a0"/><stop offset="1" stop-color="#30c078"/></linearGradient>
</defs>
<rect width="173" height="105" fill="#000"/>
<rect y="26" width="173" height="7" fill="#0a0a28"/><rect y="32.700" width="173" height="6" fill="#10123c"/><rect y="38.500" width="173" height="7.200" fill="#241c5c"/><rect y="45.500" width="173" height="3.700" fill="#3a2080"/><rect y="49" width="173" height="3.700" fill="#2c3c78"/><rect y="52.500" width="173" height="3.700" fill="#184880"/><rect y="56" width="173" height="7.200" fill="#145c74"/><rect y="63" width="173" height="10.700" fill="#18806c"/><rect y="73.500" width="173" height="13.500" fill="#1c9850"/>
<g stroke="url(#t30_st)" stroke-width="0.750"><path d="M67.500 8.200 L24.300 51.400"/><path d="M68.600 17 L24.300 61.900"/><path d="M64 22 L24.300 64"/></g>
<path d="M13.800 87 L57.500 47 L72.700 61.300 L104.500 36.200 L161.400 87 Z" fill="#000"/>
<path d="M57.500 47 L47 58.400 L61 72.400 L66 66 L64 60 Z" fill="#0a0a28"/>
<path d="M104.500 36.200 L89 49 L118.200 80.500 Z" fill="#0a0a2c"/>
<path d="M57.500 47 L72.700 61.300 L66 66 L64 60 Z" fill="url(#t30_f)"/>
<path d="M104.500 36.200 L136.900 65.400 L118.200 80.500 Z" fill="url(#t30_f)"/>
<g stroke="url(#t30_st)" stroke-width="0.750"><path d="M103 42 L83.800 63.600"/><path d="M101.300 56.600 L83.800 73.500"/><path d="M98 50 L84 66"/></g>
<path d="M129.500 30.500 A4.300 4.300 0 1 0 132.800 38 A4.800 4.800 0 0 1 129.500 30.500 Z" fill="#f8f8f8"/>
</svg>
<div class="lbl">Windows XP night (ora...</div></div>
</div><!-- /listbox -->

<svg class="abs" style="left:1425px;top:175px" width="464" height="261" viewBox="0 0 464 261">
<defs>
 <linearGradient id="pvb1" x1="0" y1="0" x2="1" y2="0"><stop offset="0" stop-color="#1263b6"/><stop offset="0.45" stop-color="#103a8e"/><stop offset="1" stop-color="#14085a"/></linearGradient>
 <linearGradient id="pvb2" x1="0" y1="0" x2="1" y2="0"><stop offset="0" stop-color="#1050a4"/><stop offset="0.5" stop-color="#10287a"/><stop offset="1" stop-color="#140650"/></linearGradient>
 <linearGradient id="pvp1" x1="0" y1="0" x2="1" y2="0"><stop offset="0" stop-color="#2c0052"/><stop offset="0.35" stop-color="#5a005c"/><stop offset="0.7" stop-color="#900064"/><stop offset="1" stop-color="#a80068"/></linearGradient>
 <linearGradient id="pvp2" x1="0" y1="1" x2="1" y2="0"><stop offset="0" stop-color="#6a0060"/><stop offset="0.6" stop-color="#b00068"/><stop offset="1" stop-color="#cc0070"/></linearGradient>
 <linearGradient id="pvp0" x1="0" y1="0" x2="1" y2="0"><stop offset="0" stop-color="#4a0858"/><stop offset="1" stop-color="#8a0064"/></linearGradient>
 <linearGradient id="pvlg" x1="0" y1="1" x2="1" y2="0"><stop offset="0" stop-color="#30b8f0"/><stop offset="0.5" stop-color="#8a80d0"/><stop offset="1" stop-color="#e040c0"/></linearGradient>
 <pattern id="pvst" width="34" height="34" patternUnits="userSpaceOnUse" patternTransform="rotate(28)"><rect width="34" height="17" fill="#000" fill-opacity="0.07"/></pattern>
</defs>
<rect width="464" height="261" fill="#140650"/>
<!-- blue waves -->
<path d="M0 0 H300 C270 25 240 20 215 30 C190 45 175 62 150 64 C120 66 95 55 70 75 C50 95 45 118 25 120 C15 121 5 117 0 112 Z" fill="url(#pvb2)"/>
<path d="M0 0 H235 C215 15 205 30 185 42 C160 58 140 62 115 62 C90 62 75 70 60 85 C45 100 30 105 0 103 Z" fill="url(#pvb1)"/>
<path d="M60 85 C80 65 110 62 140 66 C170 68 185 62 215 30 C240 20 270 25 300 40 C260 35 240 40 225 50 C200 75 175 95 150 100 C120 103 100 92 80 97 C65 102 58 118 45 121 C35 123 15 121 0 112 V103 C30 105 45 100 60 85 Z" fill="#10207a" fill-opacity="0.55"/>
<path d="M0 0 H300 C270 25 240 20 215 30 C190 45 175 62 150 64 C120 66 95 55 70 75 C50 95 45 118 25 120 C15 121 5 117 0 112 Z" fill="url(#pvst)"/>
<!-- pink waves -->
<path d="M190 176 C200 160 215 152 232 156 C255 162 270 174 295 172 C320 168 335 150 350 140 C360 134 375 133 385 137 L400 200 L200 200 Z" fill="url(#pvp0)"/>
<path d="M330 152 C345 140 355 132 370 134 C378 135 382 137 387 136 C400 128 415 127 428 129 C445 132 455 140 464 147 V261 H250 Z" fill="url(#pvp2)"/>
<path d="M0 215 C20 212 40 200 60 198 C85 197 100 208 120 205 C145 200 160 182 185 179 C210 176 235 178 260 186 C285 194 310 202 340 204 C375 205 395 180 427 170 C440 167 452 175 464 184 V261 H0 Z" fill="url(#pvp1)"/>
<path d="M160 232 C180 222 200 216 225 220 C260 226 290 240 320 236 C350 230 370 205 400 190 C425 178 445 172 464 185 V261 H120 Z" fill="#a00068" fill-opacity="0.45"/>
<path d="M0 215 C20 212 40 200 60 198 C85 197 100 208 120 205 C145 200 160 182 185 179 C210 176 235 178 260 186 C285 194 310 202 340 204 C375 205 395 180 427 170 C440 167 452 175 464 184 V261 H0 Z" fill="url(#pvst)"/>
<!-- logo -->
<rect x="89" y="100" width="51" height="51" rx="6" fill="url(#pvlg)"/>
<rect x="89" y="100" width="51" height="51" rx="6" fill="url(#pvst)"/>
<rect x="113.500" y="100" width="1.200" height="51" fill="#2a1a60"/>
<rect x="89" y="124.500" width="51" height="1.200" fill="#2a1a60"/>

</svg>

<div class="row" style="left:1424.500px;top:533px;font-size:14.6px">Name:</div>
<div class="row" style="left:1647px;top:533px;font-size:15px;-webkit-text-stroke:0.5px #000;letter-spacing:0">Windows 12</div>
<div class="row" style="left:1424.500px;top:564px;font-size:14.6px">Created by:</div>
<div class="row" style="left:1647px;top:563px;color:#2a7ad2">Admin</div>
<div class="row" style="left:1424.500px;top:595px;font-size:14.6px">Date:</div>
<div class="row" style="left:1647px;top:595px">06/07/2025</div>
<div class="row" style="left:1424.500px;top:625px;font-size:14.6px">Downloads:</div>
<div class="row" style="left:1647px;top:625px">6275</div>

<!-- mouse cursor -->
<svg class="abs" style="left:1549px;top:526px" width="18" height="26" viewBox="0 0 18 26"><path d="M1.500 1.500 V19.500 L5.800 15.800 L9 23.500 L12 22.300 L8.800 14.800 H14.500 Z" fill="#fff" stroke="#222" stroke-width="1.200" stroke-linejoin="round"/></svg>

<div class="btn" style="left:1611px;top:988px;width:94px;border:1px solid #3c7fb1;background:linear-gradient(#eaf6fd 0%,#d9f0fc 49%,#bee6fd 50%,#a7d9f5 100%);box-shadow:inset 0 0 0 1px #48d8fb">Load</div>
<div class="btn" style="left:1713px;top:988px;width:93px">Apply</div>
<div class="btn" style="left:1814px;top:988px;width:94px">Cancel</div>
</body>
</html>
